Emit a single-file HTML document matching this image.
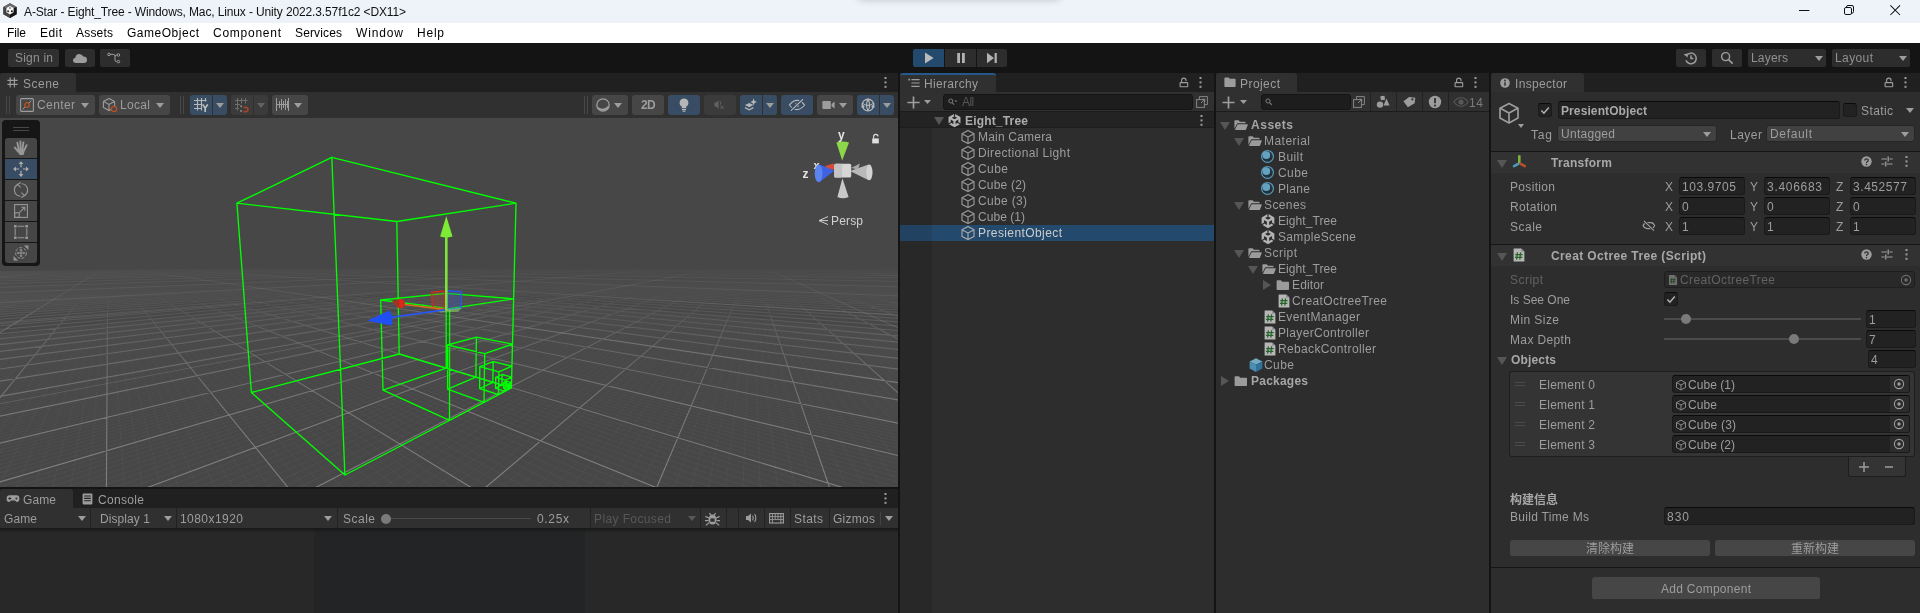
<!DOCTYPE html>
<html><head><meta charset="utf-8"><title>Unity</title>
<style>
html,body{margin:0;padding:0;}
body{width:1920px;height:613px;overflow:hidden;background:#141414;position:relative;font-family:"Liberation Sans","Noto Sans CJK SC",sans-serif;font-size:12px;}
.b{position:absolute;box-sizing:border-box;display:block;}
.t{position:absolute;white-space:pre;line-height:16px;height:16px;}
.fld{background:#2a2a2a;border:1px solid #212121;border-top-color:#0d0d0d;border-radius:3px;}
.btn{background:#515151;border-radius:3px;}
.on{background:#46607c;}
#root{position:absolute;left:0;top:0;width:1920px;height:613px;will-change:transform;}

</style></head>
<body>
<div id="root">
<div class="b " style="left:0px;top:0px;width:1920px;height:23px;background:#eef3fa;"></div>
<div class="b " style="left:856px;top:-12px;width:206px;height:12px;background:#eef3fa;border-radius:0 0 8px 8px;box-shadow:0 1px 6px rgba(40,50,70,.2);"></div>
<svg class="b" style="left:3px;top:3.2px;" width="14" height="15.2" viewBox="0 0 14 15.2"><path d="M7 .2L13.6 3.9V11.3L7 15L.4 11.3V3.9Z" fill="#2a2a2a"/><path d="M7 .2L13.6 3.9L7 7.6L.4 3.9Z" fill="#6a6a6a"/><path d="M.4 3.9L7 7.6V15L.4 11.3Z" fill="#444"/><path d="M13.6 3.9L7 7.6V15L13.6 11.3Z" fill="#141414"/><path d="M7 3L10.6 5.1V9.3L7 11.4L3.4 9.3V5.1Z" fill="#f4f4f4"/><circle cx="7" cy="5" r="1" fill="#888"/><circle cx="5.1" cy="8.3" r="1" fill="#333"/><circle cx="8.9" cy="8.3" r="1" fill="#111"/></svg>
<span class="t " id="t1" style="left:24px;top:4px;color:#111;font-size:12px;letter-spacing:-0.128px;">A-Star - Eight_Tree - Windows, Mac, Linux - Unity 2022.3.57f1c2 &lt;DX11&gt;</span>
<svg class="b" style="left:1799px;top:10px;" width="11" height="1" viewBox="0 0 11 1"><rect x="0" y="0" width="10.4" height="1" fill="#111"/></svg>
<svg class="b" style="left:1843px;top:5px;" width="12" height="12" viewBox="0 0 12 12"><rect x="1.5" y="2.5" width="7" height="7" rx="1.4" fill="none" stroke="#111" stroke-width="1"/><path d="M3.5 2.5V2Q3.5 .5 5 .5H9Q10.5 .5 10.5 2V6.5Q10.5 8 9 8.3H8.5" fill="none" stroke="#111" stroke-width="1"/></svg>
<svg class="b" style="left:1890px;top:5px;" width="11" height="11" viewBox="0 0 11 11"><path d="M.4 .4L10 10M10 .4L.4 10" stroke="#111" stroke-width="1.05"/></svg>
<div class="b " style="left:0px;top:23px;width:1920px;height:20px;background:#ffffff;"></div>
<span class="t " id="t2" style="left:7px;top:25px;color:#000;font-size:12px;letter-spacing:-0.115px;">File</span>
<span class="t " id="t3" style="left:40px;top:25px;color:#000;font-size:12px;letter-spacing:0.438px;">Edit</span>
<span class="t " id="t4" style="left:76px;top:25px;color:#000;font-size:12px;letter-spacing:0.197px;">Assets</span>
<span class="t " id="t5" style="left:127px;top:25px;color:#000;font-size:12px;letter-spacing:0.516px;">GameObject</span>
<span class="t " id="t6" style="left:213px;top:25px;color:#000;font-size:12px;letter-spacing:0.744px;">Component</span>
<span class="t " id="t7" style="left:295px;top:25px;color:#000;font-size:12px;letter-spacing:0.141px;">Services</span>
<span class="t " id="t8" style="left:356px;top:25px;color:#000;font-size:12px;letter-spacing:0.863px;">Window</span>
<span class="t " id="t9" style="left:417px;top:25px;color:#000;font-size:12px;letter-spacing:0.771px;">Help</span>
<div class="b " style="left:0px;top:43px;width:1920px;height:30px;background:#141414;"></div>
<div class="b " style="left:8px;top:49px;width:51px;height:18px;background:#303030;border-radius:2px;"></div>
<span class="t " id="t10" style="left:15px;top:50px;color:#909090;font-size:12px;letter-spacing:0.216px;">Sign in</span>
<div class="b " style="left:65px;top:49px;width:30px;height:18px;background:#2d2d2d;border-radius:2px;"></div>
<svg class="b" style="left:72px;top:52px;" width="16" height="12" viewBox="0 0 16 12"><path d="M4 11Q1 11 1 8.3Q1 6 3.4 5.7Q3.8 2 7.4 2Q10.2 2 11.2 4.6Q14.8 4.4 15 7.8Q15 11 12 11Z" fill="#9d9d9d"/></svg>
<div class="b " style="left:100px;top:49px;width:30px;height:18px;background:#2d2d2d;border-radius:2px;"></div>
<svg class="b" style="left:107px;top:52px;" width="14" height="12" viewBox="0 0 14 12"><path d="M3 2.4H6.5Q8 2.4 8 4V8Q8 9.6 9.6 9.6H10M8 4.4Q8 3 9.4 3H10" fill="none" stroke="#9d9d9d" stroke-width="1"/><circle cx="2" cy="2.4" r="1.3" fill="none" stroke="#9d9d9d" stroke-width="1"/><circle cx="11.4" cy="3" r="1.3" fill="none" stroke="#9d9d9d" stroke-width="1"/><circle cx="11.4" cy="9.6" r="1.3" fill="none" stroke="#9d9d9d" stroke-width="1"/></svg>
<div class="b " style="left:913px;top:49px;width:31px;height:18px;background:#234a6c;border-radius:2px 0 0 2px;"></div>
<svg class="b" style="left:924px;top:52px;" width="10" height="12" viewBox="0 0 10 12"><path d="M1 .6V11.4L9.6 6Z" fill="#bababa"/></svg>
<div class="b " style="left:945px;top:49px;width:31px;height:18px;background:#2d2d2d;"></div>
<svg class="b" style="left:956px;top:52px;" width="10" height="12" viewBox="0 0 10 12"><path d="M1.2 1H4V11H1.2ZM6 1H8.8V11H6Z" fill="#b3b3b3"/></svg>
<div class="b " style="left:977px;top:49px;width:30px;height:18px;background:#2d2d2d;border-radius:0 2px 2px 0;"></div>
<svg class="b" style="left:986px;top:52px;" width="12" height="12" viewBox="0 0 12 12"><path d="M1 .8V11.2L8 6ZM8.6 1H10.8V11H8.6Z" fill="#b3b3b3"/></svg>
<div class="b " style="left:1676px;top:49px;width:30px;height:18px;background:#2d2d2d;border-radius:2px;"></div>
<svg class="b" style="left:1683px;top:51px;" width="15" height="14" viewBox="0 0 15 14"><path d="M3.4 4.6A5.3 5.3 0 1 1 3 9.4" fill="none" stroke="#9d9d9d" stroke-width="1.5"/><path d="M.6 3.2L4.8 2.4L4.6 6.6Z" fill="#9d9d9d"/><path d="M8 4.2V7.4H10.4" fill="none" stroke="#9d9d9d" stroke-width="1.5"/></svg>
<div class="b " style="left:1712px;top:49px;width:30px;height:18px;background:#2d2d2d;border-radius:2px;"></div>
<svg class="b" style="left:1720px;top:51px;" width="14" height="14" viewBox="0 0 14 14"><circle cx="5.6" cy="5.6" r="4" fill="none" stroke="#9d9d9d" stroke-width="1.4"/><path d="M8.6 8.6L12.6 12.6" stroke="#9d9d9d" stroke-width="1.7"/></svg>
<div class="b " style="left:1748px;top:49px;width:78px;height:18px;background:#2d2d2d;border-radius:2px;"></div>
<span class="t " id="t11" style="left:1751px;top:50px;color:#909090;font-size:12px;letter-spacing:0.194px;">Layers</span>
<svg class="b" style="left:1814.5px;top:56.0px;" width="8" height="5" viewBox="0 0 8 5"><path d="M0 0H8L4.0 5Z" fill="#9d9d9d"/></svg>
<div class="b " style="left:1832px;top:49px;width:78px;height:18px;background:#2d2d2d;border-radius:2px;"></div>
<span class="t " id="t12" style="left:1835px;top:50px;color:#909090;font-size:12px;letter-spacing:0.394px;">Layout</span>
<svg class="b" style="left:1898.5px;top:56.0px;" width="8" height="5" viewBox="0 0 8 5"><path d="M0 0H8L4.0 5Z" fill="#9d9d9d"/></svg>
<div class="b " style="left:0px;top:73px;width:898px;height:19px;background:#202020;"></div>
<div class="b " style="left:0px;top:73px;width:76px;height:19px;background:#303030;border-radius:3px 3px 0 0;"></div>
<svg class="b" style="left:7px;top:77px;" width="11" height="11" viewBox="0 0 11 11"><path d="M3.2 .5V10.5M7.4 .5V10.5M.4 3.4H10.6M.4 7.4H10.6" stroke="#9d9d9d" stroke-width="1.1"/></svg>
<span class="t " id="t13" style="left:23px;top:75.5px;color:#9d9d9d;font-size:12px;letter-spacing:0.492px;">Scene</span>
<svg class="b" style="left:883.5px;top:77.0px;" width="3" height="11" viewBox="0 0 3 11"><rect x=".5" y="0" width="2" height="2" fill="#9d9d9d"/><rect x=".5" y="4.4" width="2" height="2" fill="#9d9d9d"/><rect x=".5" y="8.8" width="2" height="2" fill="#9d9d9d"/></svg>
<div class="b " style="left:0px;top:92px;width:898px;height:26px;background:#303030;"></div>
<svg class="b" style="left:6px;top:96px;" width="4" height="18" viewBox="0 0 4 18"><path d="M.5 0V18M3.5 0V18" stroke="#484848" stroke-width="1"/></svg>
<svg class="b" style="left:180px;top:96px;" width="4" height="18" viewBox="0 0 4 18"><path d="M.5 0V18M3.5 0V18" stroke="#484848" stroke-width="1"/></svg>
<svg class="b" style="left:584px;top:96px;" width="4" height="18" viewBox="0 0 4 18"><path d="M.5 0V18M3.5 0V18" stroke="#484848" stroke-width="1"/></svg>
<div class="b " style="left:16px;top:95px;width:79px;height:20px;background:#464646;border-radius:3px;"></div>
<svg class="b" style="left:20px;top:98px;" width="14" height="14" viewBox="0 0 14 14"><rect x=".6" y=".6" width="12.8" height="12.8" rx="1" fill="none" stroke="#9d9d9d" stroke-width="1.1"/><path d="M2.6 11.4L11.4 2.6" stroke="#9d9d9d" stroke-width="1"/><circle cx="7" cy="7" r="2.3" fill="#464646" stroke="#ba5022" stroke-width="1.3"/></svg>
<span class="t " id="t14" style="left:37px;top:97px;color:#9d9d9d;font-size:12px;letter-spacing:0.394px;">Center</span>
<svg class="b" style="left:81.0px;top:103.0px;" width="8" height="5" viewBox="0 0 8 5"><path d="M0 0H8L4.0 5Z" fill="#9d9d9d"/></svg>
<div class="b " style="left:99px;top:95px;width:71px;height:20px;background:#464646;border-radius:3px;"></div>
<svg class="b" style="left:102px;top:97px;" width="16" height="16" viewBox="0 0 16 16"><path d="M7 1.6L12.6 4.4V10.6L7 13.6L1.4 10.6V4.4Z" fill="none" stroke="#9d9d9d" stroke-width="1.1" stroke-linejoin="round"/><path d="M1.6 4.5L7 7.4L12.4 4.5M7 7.4V13.4" fill="none" stroke="#9d9d9d" stroke-width="1.1"/><circle cx="12" cy="12" r="2.6" fill="#464646" stroke="#ba5022" stroke-width="1.3"/></svg>
<span class="t " id="t15" style="left:120px;top:97px;color:#9d9d9d;font-size:12px;letter-spacing:0.328px;">Local</span>
<svg class="b" style="left:156.0px;top:103.0px;" width="8" height="5" viewBox="0 0 8 5"><path d="M0 0H8L4.0 5Z" fill="#9d9d9d"/></svg>
<div class="b " style="left:190px;top:95px;width:22px;height:20px;background:#384d63;border-radius:3px 0 0 3px;"></div>
<svg class="b" style="left:194px;top:98px;" width="15" height="15" viewBox="0 0 15 15"><path d="M3.5 0V12.5M7.5 0V12.5M11.5 0V3.5M0 2.5H12.5M0 6.5H8M0 10.5H8" stroke="#b6b6b6" stroke-width="1.15" fill="none"/><path d="M8.7 6.4L11.2 10.2L13.7 6.4M11.2 10V14" stroke="#bdbdbd" stroke-width="1.7" fill="none"/></svg>
<div class="b " style="left:213px;top:95px;width:14px;height:20px;background:#384d63;border-radius:0 3px 3px 0;"></div>
<svg class="b" style="left:216.0px;top:103.0px;" width="8" height="5" viewBox="0 0 8 5"><path d="M0 0H8L4.0 5Z" fill="#9d9d9d"/></svg>
<div class="b " style="left:231px;top:95px;width:22px;height:20px;background:#3b3b3b;border-radius:3px 0 0 3px;"></div>
<svg class="b" style="left:235px;top:98px;" width="15" height="15" viewBox="0 0 15 15"><path d="M2.5 0V12.5M6.5 0V5.5M10.5 0V5.5M0 2.5H12.5M0 6.5H5M0 10.5H4" stroke="#6e6e6e" stroke-width="1" fill="none"/><path d="M8.4 9.4H10.8A2.1 2.1 0 0 1 10.8 13.6H8.4" fill="none" stroke="#a04826" stroke-width="1.8"/><rect x="5.2" y="7.3" width="1.9" height="1.9" fill="#838383"/><rect x="5.2" y="12" width="1.9" height="1.9" fill="#838383"/></svg>
<div class="b " style="left:254px;top:95px;width:14px;height:20px;background:#3b3b3b;border-radius:0 3px 3px 0;"></div>
<svg class="b" style="left:257.0px;top:103.0px;" width="8" height="5" viewBox="0 0 8 5"><path d="M0 0H8L4.0 5Z" fill="#626262"/></svg>
<div class="b " style="left:272px;top:95px;width:36px;height:20px;background:#464646;border-radius:3px;"></div>
<svg class="b" style="left:275px;top:98px;" width="15" height="14" viewBox="0 0 15 14"><path d="M1.5 0V13M13.5 0V13M1.5 6.5H13.5M4.5 3V10M6.5 1V12M8.5 3V10M10.5 1V12M12.5 3V10" stroke="#9d9d9d" stroke-width="1" fill="none"/></svg>
<svg class="b" style="left:294.0px;top:103.0px;" width="8" height="5" viewBox="0 0 8 5"><path d="M0 0H8L4.0 5Z" fill="#9d9d9d"/></svg>
<div class="b " style="left:592px;top:95px;width:36px;height:20px;background:#464646;border-radius:3px;"></div>
<svg class="b" style="left:595px;top:97px;" width="16" height="16" viewBox="0 0 16 16"><circle cx="8" cy="8" r="6.2" fill="none" stroke="#9d9d9d" stroke-width="1.3"/><path d="M3 10.6A6 6 0 0 0 13.4 10.6A7.4 5.6 0 0 1 3 10.6Z" fill="#9d9d9d"/><path d="M2.4 9.4Q8 14.4 13.6 8.6L13 12L8 14.2L3.4 12.4Z" fill="#9d9d9d"/></svg>
<svg class="b" style="left:614.0px;top:103.0px;" width="8" height="5" viewBox="0 0 8 5"><path d="M0 0H8L4.0 5Z" fill="#9d9d9d"/></svg>
<div class="b " style="left:632px;top:95px;width:32px;height:20px;background:#464646;border-radius:3px;"></div>
<span class="t " id="t16" style="left:641px;top:97px;color:#9d9d9d;font-size:12px;letter-spacing:-0.600px;font-weight:bold;">2D</span>
<div class="b " style="left:668px;top:95px;width:32px;height:20px;background:#384d63;border-radius:3px;"></div>
<svg class="b" style="left:677px;top:97px;" width="14" height="16" viewBox="0 0 14 16"><path d="M7 1.4A4.4 4.4 0 0 1 9.2 9.6V11.2H4.8V9.6A4.4 4.4 0 0 1 7 1.4Z" fill="#b6b6b6"/><path d="M5 12.6H9M5.6 14.2H8.4" stroke="#b6b6b6" stroke-width="1.1"/></svg>
<div class="b " style="left:704px;top:95px;width:32px;height:20px;background:#3b3b3b;border-radius:3px;"></div>
<svg class="b" style="left:713px;top:99px;" width="14" height="12" viewBox="0 0 14 12"><path d="M1.4 3.4H3.2L5.6 1.2V9.8L3.2 7.6H1.4Z" fill="#626262"/><path d="M7.4 6.6L10.6 10M10.6 6.6L7.4 10" stroke="#626262" stroke-width="1"/><path d="M7 2.4Q8.4 4 7.4 5.6" stroke="#626262" stroke-width="1" fill="none"/></svg>
<div class="b " style="left:740px;top:95px;width:22px;height:20px;background:#384d63;border-radius:3px 0 0 3px;"></div>
<svg class="b" style="left:744px;top:98px;" width="14" height="14" viewBox="0 0 14 14"><path d="M1 7L5.2 5L9.4 7L5.2 9.2Z" fill="#b6b6b6"/><path d="M1 9.6L5.2 11.8L9.4 9.6" fill="none" stroke="#b6b6b6" stroke-width="1.2"/><path d="M9.6 .6L10.6 3L13 4L10.6 5L9.6 7.4L8.6 5L6.2 4L8.6 3Z" fill="#b6b6b6"/></svg>
<div class="b " style="left:763px;top:95px;width:14px;height:20px;background:#384d63;border-radius:0 3px 3px 0;"></div>
<svg class="b" style="left:766.0px;top:103.0px;" width="8" height="5" viewBox="0 0 8 5"><path d="M0 0H8L4.0 5Z" fill="#9d9d9d"/></svg>
<div class="b " style="left:781px;top:95px;width:32px;height:20px;background:#384d63;border-radius:3px;"></div>
<svg class="b" style="left:788px;top:98px;" width="18" height="14" viewBox="0 0 18 14"><path d="M1.4 7Q5 2.4 9 2.4Q13 2.4 16.6 7Q13 11.6 9 11.6Q5 11.6 1.4 7Z" fill="none" stroke="#b6b6b6" stroke-width="1.2"/><circle cx="9" cy="7" r="2.2" fill="#b6b6b6"/><path d="M3 12.6L15 1.2" stroke="#2f445e" stroke-width="3"/><path d="M3 12.6L15 1.2" stroke="#b6b6b6" stroke-width="1.2"/></svg>
<div class="b " style="left:817px;top:95px;width:36px;height:20px;background:#464646;border-radius:3px;"></div>
<svg class="b" style="left:822px;top:100px;" width="14" height="10" viewBox="0 0 14 10"><rect x=".4" y="1" width="8.4" height="8" rx=".8" fill="#9d9d9d"/><path d="M9.6 4L12.6 1.6V8.6L9.6 6.2Z" fill="#9d9d9d"/></svg>
<svg class="b" style="left:839.0px;top:103.0px;" width="8" height="5" viewBox="0 0 8 5"><path d="M0 0H8L4.0 5Z" fill="#9d9d9d"/></svg>
<div class="b " style="left:857px;top:95px;width:22px;height:20px;background:#384d63;border-radius:3px 0 0 3px;"></div>
<svg class="b" style="left:861px;top:98px;" width="14" height="14" viewBox="0 0 14 14"><circle cx="7" cy="7" r="5.8" fill="none" stroke="#b6b6b6" stroke-width="1.3"/><path d="M1.6 5.4Q7 9.4 12.4 5.4M7 1.2Q4 7 7 12.8M7 1.2Q10.4 7 7 12.8" fill="none" stroke="#b6b6b6" stroke-width="1.1"/><circle cx="7" cy="2" r="1.5" fill="#b6b6b6"/><circle cx="2" cy="8.6" r="1.5" fill="#b6b6b6"/><circle cx="12" cy="8.6" r="1.5" fill="#b6b6b6"/></svg>
<div class="b " style="left:880px;top:95px;width:14px;height:20px;background:#384d63;border-radius:0 3px 3px 0;"></div>
<svg class="b" style="left:883.0px;top:103.0px;" width="8" height="5" viewBox="0 0 8 5"><path d="M0 0H8L4.0 5Z" fill="#9d9d9d"/></svg>
<svg id="scenesvg" width="898" height="369" viewBox="0 0 898 369" style="position:absolute;left:0px;top:118px">
<defs>
<linearGradient id="sky" x1="0" y1="0" x2="0" y2="1"><stop offset="0" stop-color="#474747"/><stop offset="1" stop-color="#474747"/></linearGradient>
<linearGradient id="fade" x1="0" y1="0" x2="0" y2="1"><stop offset="0.406" stop-color="#000"/><stop offset="0.477" stop-color="#202020"/><stop offset="0.585" stop-color="#707070"/><stop offset="0.775" stop-color="#d0d0d0"/><stop offset="1" stop-color="#fff"/></linearGradient>
<linearGradient id="fade2" x1="0" y1="0" x2="0" y2="1"><stop offset="0.406" stop-color="#000"/><stop offset="0.433" stop-color="#555"/><stop offset="0.558" stop-color="#bbb"/></linearGradient>
<mask id="gm2"><rect width="898" height="369" fill="url(#fade2)"/></mask>
<mask id="gm"><rect width="898" height="369" fill="url(#fade)"/></mask>
</defs>
<rect width="898" height="369" fill="url(#sky)"/>
<g mask="url(#gm)" fill="none">
<path d="M918 221.9L910.9 218.6M918 224.9L903.7 218M918 228.1L896.7 217.3M918 235.4L883 216.1M918 239.5L876.4 215.5M918 243.9L869.8 215M918 248.9L863.4 214.4M918 254.3L857.1 213.8M918 260.3L850.8 213.3M918 267L844.7 212.8M918 274.5L838.7 212.2M-20 219.6L-19.6 219.4M918 283L832.8 211.7M-20 223L-12.7 218.7M918 303.8L821.2 210.7M-20 230.8L0.6 217.4M918 316.7L815.6 210.2M-20 235.3L7.1 216.8M918 331.8L810 209.7M-20 240.4L13.5 216.1M918 349.8L804.5 209.2M-20 246.1L19.8 215.5M918 371.6L799.2 208.7M-20 252.6L25.9 214.9M911.8 389L793.9 208.3M-20 260L32 214.3M892.9 389L788.6 207.8M-20 268.5L38 213.7M874 389L783.5 207.4M-20 278.4L43.8 213.2M855.1 389L778.4 206.9M-20 290.2L49.6 212.6M817.4 389L768.5 206M-20 321.4L60.9 211.5M798.5 389L763.7 205.6M-20 342.8L66.4 211M779.7 389L758.9 205.2M-20 370.3L71.8 210.4M760.9 389L754.2 204.8M-11.2 389L77.1 209.9M742.2 389L749.6 204.4M8.3 389L82.4 209.4M723.4 389L745 204M27.9 389L87.5 208.9M704.7 389L740.5 203.6M47.5 389L92.6 208.4M685.9 389L736 203.2M67.1 389L97.6 207.9M667.2 389L731.7 202.8M86.7 389L102.6 207.4M629.8 389L723.1 202M126 389L112.2 206.5M611.2 389L718.9 201.7M145.7 389L116.9 206M592.5 389L714.7 201.3M165.4 389L121.6 205.6M573.9 389L710.6 200.9M185.1 389L126.1 205.1M555.3 389L706.6 200.6M204.8 389L130.7 204.7M536.7 389L702.6 200.2M224.6 389L135.1 204.3M518.1 389L698.7 199.9M244.3 389L139.5 203.8M499.5 389L694.8 199.5M264.1 389L143.8 203.4M481 389L691 199.2M283.9 389L148.1 203M443.9 389L683.5 198.5M323.6 389L156.4 202.2M425.4 389L679.8 198.2M343.5 389L160.5 201.8M407 389L676.2 197.9M363.3 389L164.5 201.4M388.5 389L672.6 197.6M383.2 389L168.5 201M370 389L669 197.3M403.2 389L172.5 200.6M351.6 389L665.5 197M423.1 389L176.3 200.3M333.2 389L662.1 196.7M443.1 389L180.1 199.9M314.8 389L658.7 196.4M463 389L183.9 199.5M296.4 389L655.3 196.1M483 389L187.6 199.1M259.7 389L648.7 195.5M523.1 389L194.9 198.4M241.3 389L645.4 195.2M543.1 389L198.5 198.1M223 389L642.2 194.9M563.2 389L202 197.7M204.7 389L639 194.6M583.3 389L205.5 197.4M186.4 389L635.9 194.4M603.4 389L209 197.1M168.2 389L632.8 194.1M623.5 389L212.4 196.7M149.9 389L629.7 193.8M643.7 389L215.7 196.4M131.7 389L626.7 193.5M663.9 389L219.1 196.1M113.4 389L623.7 193.3M684 389L222.3 195.8M77 389L617.8 192.8M724.5 389L228.8 195.1M58.9 389L614.9 192.5M744.7 389L231.9 194.8M40.7 389L612.1 192.3M765 389L235 194.5M22.5 389L609.3 192M785.3 389L238.1 194.2M4.4 389L606.5 191.8M805.6 389L241.2 193.9M-13.7 389L603.7 191.5M825.9 389L244.2 193.6M-20 385.3L601 191.3M846.2 389L247.2 193.3M-20 379.9L598.3 191M866.6 389L250.1 193.1M-20 374.7L595.6 190.8M887 389L253 192.8M-20 365L590.3 190.3M918 386.1L258.7 192.2M-20 360.4L587.7 190.1M918 380.3L261.5 191.9M-20 356L585.2 189.9M918 374.8L264.3 191.7M-20 351.8L582.6 189.7M918 369.5L267.1 191.4M-20 347.8L580.1 189.4M918 364.5L269.8 191.1M-20 344L577.7 189.2M918 359.7L272.5 190.9M-20 340.2L575.2 189M918 355L275.1 190.6M-20 336.7L572.8 188.8M918 350.6L277.7 190.4M-20 333.2L570.4 188.6M918 346.4L280.3 190.1M-20 326.7L565.6 188.2M918 338.4L285.4 189.6M-20 323.6L563.3 188M918 334.6L287.9 189.4M-20 320.6L561 187.8M918 331L290.4 189.1M-20 317.7L558.7 187.6M918 327.5L292.9 188.9M-20 314.9L556.4 187.4M918 324.2L295.3 188.6M-20 312.2L554.2 187.2M918 320.9L297.7 188.4M-20 309.6L552 187M918 317.8L300.1 188.2M-20 307L549.8 186.8M918 314.8L302.5 187.9M-20 304.6L547.6 186.6M918 311.9L304.8 187.7M-20 299.9L543.3 186.2M918 306.4L309.4 187.3M-20 297.7L541.2 186M918 303.7L311.7 187M-20 295.5L539.1 185.8M918 301.2L313.9 186.8M-20 293.4L537.1 185.6M918 298.7L316.1 186.6M-20 291.3L535 185.5M918 296.3L318.3 186.4M-20 289.3L533 185.3M918 294L320.5 186.2M-20 287.4L531 185.1M918 291.7L322.6 186M-20 285.5L529 184.9M918 289.5L324.8 185.8M-20 283.6L527 184.8M918 287.4L326.9 185.6M-20 280.1L523.1 184.4M918 283.3L331 185.2M-20 278.4L521.2 184.2M918 281.4L333.1 185M-20 276.8L519.3 184.1M918 279.5L335.1 184.8M-20 275.2L517.4 183.9M918 277.7L337.1 184.6M-20 273.6L515.5 183.7M918 275.9L339.1 184.4M-20 272L513.7 183.6M918 274.1L341.1 184.2M-20 270.5L511.9 183.4M918 272.4L343 184M-20 269.1L510 183.3M918 270.7L345 183.8M-20 267.7L508.2 183.1M918 269.1L346.9 183.6M-20 264.9L504.7 182.8M918 266L350.6 183.2M-20 263.6L502.9 182.6M918 264.5L352.5 183.1M-20 262.3L501.2 182.5M918 263.1L354.3 182.9M-20 261L499.5 182.3M918 261.6L356.2 182.7M-20 259.8L497.8 182.2M918 260.2L358 182.5M-20 258.6L496.1 182M918 258.9L359.8 182.4M-20 257.4L494.4 181.9M918 257.5L361.6 182.2M-20 256.2L492.7 181.7M918 256.2L363.3 182M-20 255.1L491.1 181.6M918 255L365.1 181.8M-20 252.9L487.8 181.3M918 252.5L368.5 181.5M-20 251.8L486.2 181.2M918 251.3L370.2 181.3M-20 250.7L484.6 181M918 250.1L371.9 181.2M-20 249.7L483.1 180.9M918 249L373.6 181M-20 248.7L481.5 180.7M918 247.9L375.2 180.8M-20 247.7L479.9 180.6M918 246.8L376.9 180.7M-20 246.8L478.4 180.5M918 245.7L378.5 180.5M-20 245.8L476.9 180.3M918 244.7L380.1 180.4M-20 244.9L475.3 180.2M918 243.7L381.7 180.2M-20 243.1L472.3 179.9M918 241.7L384.8 179.9M-20 242.2L470.9 179.8M918 240.7L386.4 179.8M-20 241.3L469.4 179.7M918 239.8L387.9 179.6M-20 240.5L467.9 179.6M918 238.8L389.5 179.5M-20 239.6L466.5 179.4M918 237.9L391 179.3M-20 238.8L465.1 179.3M918 237L392.5 179.2M-20 238L463.6 179.2M918 236.1L394 179M-20 237.2L462.2 179.1M918 235.3L395.5 178.9M-20 236.5L460.8 178.9M918 234.4L396.9 178.7M-20 235L458.1 178.7M918 232.8L399.9 178.4M-20 234.2L456.7 178.6M918 232L401.3 178.3M-20 233.5L455.3 178.4M918 231.2L402.7 178.2M-20 232.8L454 178.3M918 230.4L404.1 178M-20 232.1L452.7 178.2M918 229.7L405.5 177.9M-20 231.4L451.3 178.1M918 228.9L406.9 177.8M-20 230.7L450 178M918 228.2L408.3 177.6M-20 230.1L448.7 177.9M918 227.5L409.6 177.5M-20 229.4L447.4 177.7M918 226.8L411 177.4M-20 228.1L444.9 177.5M918 225.4L413.7 177.1M-20 227.5L443.6 177.4M918 224.7L415 177M-20 226.9L442.4 177.3M918 224L416.3 176.8M-20 226.3L441.1 177.2M918 223.4L417.6 176.7M-20 225.7L439.9 177.1M918 222.7L418.9 176.6M-20 225.1L438.6 177M918 222.1L420.2 176.5M-20 224.5L437.4 176.9M918 221.5L421.5 176.3M-20 224L436.2 176.8M918 220.9L422.7 176.2M-20 223.4L435 176.7M918 220.3L424 176.1M-20 222.3L432.6 176.4M918 219.1L426.5 175.8M-20 221.8L431.5 176.3M918 218.5L427.7 175.7M-20 221.2L430.3 176.2M918 217.9L428.9 175.6M-20 220.7L429.1 176.1M918 217.4L430.1 175.5M-20 220.2L428 176M918 216.8L431.3 175.4M-20 219.7L426.8 175.9M918 216.3L432.5 175.3M-20 219.2L425.7 175.8M918 215.8L433.7 175.1" stroke="#8a8a8a" stroke-opacity=".10" stroke-width="1"/>
<path d="M918 152.8L913.7 152.6M918 153.2L904.8 152.5M918 153.7L896.1 152.5M918 154.3L887.5 152.4M918 154.9L879.2 152.4M918 155.5L871 152.3M918 156.3L863 152.3M918 157.2L855.2 152.2M-20 158.3L-14.8 157.9M918 158.1L847.5 152.2M-20 159L-5.8 157.8M918 159.2L840 152.1M-20 159.7L3 157.6M918 160.5L832.6 152.1M-20 160.6L11.6 157.4M918 162L825.4 152M-20 161.6L20 157.3M918 163.9L818.3 152M-20 162.8L28.2 157.1M918 166.1L811.4 152M-20 164.2L36.2 157M918 168.8L804.6 151.9M-20 166L44.1 156.9M918 172.2L797.9 151.9M-20 168.1L51.8 156.7M918 176.7L791.4 151.8M-20 170.9L59.3 156.6M918 182.9L785 151.8M-20 174.7L66.7 156.4M918 191.8L778.7 151.8M-20 179.9L73.9 156.3M918 205.9L772.5 151.7M-20 187.7L80.9 156.2M918 231.6L766.4 151.7M-20 200.7L87.8 156.1M918 292.7L760.4 151.7M-20 226.7L94.6 155.9M836.2 389L754.6 151.6M-20 304.2L101.2 155.8M648.5 389L748.8 151.6M106.3 389L107.7 155.7M462.5 389L743.2 151.6M303.8 389L114.1 155.6M278 389L737.6 151.5M503.1 389L120.3 155.5M95.2 389L732.2 151.5M704.3 389L126.5 155.4M-20 369.7L726.8 151.5M907.4 389L132.5 155.3M-20 329.9L721.5 151.4M918 342.3L138.4 155.2M-20 302.2L716.3 151.4M918 309.1L144.1 155.1M-20 281.9L711.2 151.4M918 285.3L149.8 154.9M-20 266.3L706.2 151.3M918 267.6L155.4 154.8M-20 253.9L701.3 151.3M918 253.7L160.8 154.7M-20 244L696.4 151.3M918 242.7L166.2 154.7M-20 235.7L691.7 151.2M918 233.6L171.5 154.6M-20 228.8L687 151.2M918 226.1L176.7 154.5M-20 222.8L682.4 151.2M918 219.7L181.7 154.4M-20 217.7L677.8 151.2M918 214.2L186.7 154.3M-20 213.3L673.3 151.1M918 209.5L191.6 154.2M-20 209.4L668.9 151.1M918 205.3L196.5 154.1M-20 205.9L664.6 151.1M918 201.7L201.2 154M-20 202.8L660.3 151.1M918 198.4L205.9 153.9M-20 200L656.1 151M918 195.5L210.5 153.9M-20 197.5L652 151M918 192.9L215 153.8M-20 195.3L647.9 151M918 190.5L219.4 153.7M-20 193.2L643.9 151M918 188.4L223.8 153.6M-20 191.3L639.9 150.9M918 186.4L228 153.5M-20 189.6L636 150.9M918 184.6L232.3 153.5M-20 187.9L632.2 150.9M918 182.9L236.4 153.4M-20 186.5L628.4 150.9M918 181.4L240.5 153.3M-20 185.1L624.7 150.9M918 180L244.5 153.2M-20 183.8L621 150.8M918 178.7L248.5 153.2M-20 182.6L617.4 150.8M918 177.4L252.4 153.1M-20 181.5L613.8 150.8M918 176.3L256.2 153M-20 180.5L610.2 150.8M918 175.2L260 153M-20 179.5L606.8 150.7M918 174.2L263.7 152.9M-20 178.6L603.3 150.7M918 173.3L267.4 152.8M-20 177.7L600 150.7M918 172.4L271 152.8M-20 176.9L596.6 150.7M918 171.6L274.6 152.7M-20 176.1L593.3 150.7M918 170.8L278.1 152.6M-20 175.4L590.1 150.6M918 170L281.5 152.6M-20 174.7L586.9 150.6M918 169.3L284.9 152.5M-20 174L583.7 150.6M918 168.6L288.3 152.5M-20 173.4L580.6 150.6M918 168L291.6 152.4M-20 172.8L577.5 150.6M918 167.4L294.9 152.3M-20 172.2L574.5 150.6M918 166.8L298.1 152.3M-20 171.7L571.5 150.5M918 166.3L301.2 152.2M-20 171.1L568.5 150.5M918 165.7L304.4 152.2M-20 170.7L565.6 150.5M918 165.2L307.5 152.1M-20 170.2L562.7 150.5M918 164.8L310.5 152.1M-20 169.7L559.8 150.5M918 164.3L313.5 152M-20 169.3L557 150.5M918 163.9L316.5 151.9M-20 168.9L554.2 150.4M918 163.4L319.4 151.9M-20 168.5L551.5 150.4M918 163L322.3 151.8M-20 168.1L548.8 150.4M918 162.6L325.1 151.8M-20 167.7L546.1 150.4M918 162.3L327.9 151.7M-20 167.3L543.4 150.4M918 161.9L330.7 151.7M-20 167L540.8 150.4M918 161.6L333.4 151.6M-20 166.7L538.2 150.3M918 161.2L336.1 151.6M-20 166.4L535.7 150.3M918 160.9L338.8 151.5M-20 166L533.1 150.3M918 160.6L341.4 151.5M-20 165.7L530.6 150.3M918 160.3L344 151.4M-20 165.5L528.2 150.3M918 160L346.6 151.4M-20 165.2L525.7 150.3M918 159.7L349.1 151.4M-20 164.9L523.3 150.3M918 159.4L351.6 151.3M-20 164.6L520.9 150.2M918 159.2L354.1 151.3M-20 164.4L518.6 150.2M918 158.9L356.5 151.2M-20 164.1L516.3 150.2M918 158.7L358.9 151.2M-20 163.9L514 150.2M918 158.4L361.3 151.1M-20 163.7L511.7 150.2M918 158.2L363.6 151.1M-20 163.5L509.4 150.2M918 158L366 151.1M-20 163.2L507.2 150.2M918 157.8L368.3 151M-20 163L505 150.1M918 157.5L370.5 151M-20 162.8L502.8 150.1M918 157.3L372.8 150.9M-20 162.6L500.7 150.1M918 157.1L375 150.9M-20 162.4L498.5 150.1M918 156.9L377.2 150.8M-20 162.2L496.4 150.1M918 156.8L379.3 150.8M-20 162.1L494.3 150.1M918 156.6L381.5 150.8M-20 161.9L492.3 150.1M918 156.4L383.6 150.7M-20 161.7L490.2 150.1M918 156.2L385.7 150.7M-20 161.5L488.2 150.1M918 156.1L387.8 150.7M-20 161.4L486.2 150M918 155.9L389.8 150.6M-20 161.2L484.2 150M918 155.7L391.8 150.6M-20 161L482.3 150M918 155.6L393.8 150.5M-20 160.9L480.4 150M918 155.4L395.8 150.5M-20 160.7L478.4 150M918 155.3L397.8 150.5M-20 160.6L476.5 150M918 155.1L399.7 150.4M-20 160.5L474.7 150M918 155L401.6 150.4M-20 160.3L472.8 150M918 154.8L403.5 150.4M-20 160.2L471 149.9M918 154.7L405.4 150.3M-20 160L469.1 149.9M918 154.6L407.2 150.3M-20 159.9L467.3 149.9M918 154.4L409.1 150.3M-20 159.8L465.6 149.9M918 154.3L410.9 150.2M-20 159.7L463.8 149.9M918 154.2L412.7 150.2M-20 159.5L462 149.9M918 154.1L414.4 150.2M-20 159.4L460.3 149.9M918 153.9L416.2 150.1M-20 159.3L458.6 149.9M918 153.8L417.9 150.1M-20 159.2L456.9 149.9M918 153.7L419.7 150.1M-20 159.1L455.2 149.9M918 153.6L421.4 150.1M-20 159L453.5 149.8M918 153.5L423 150M-20 158.9L451.9 149.8M918 153.4L424.7 150M-20 158.8L450.2 149.8M918 153.3L426.4 150M-20 158.7L448.6 149.8M918 153.2L428 149.9M-20 158.6L447 149.8M918 153.1L429.6 149.9M-20 158.5L445.4 149.8M918 153L431.2 149.9M-20 158.4L443.9 149.8M918 152.9L432.8 149.8M-20 158.3L442.3 149.8M918 152.8L434.4 149.8M-20 158.2L440.8 149.8M918 152.7L435.9 149.8M-20 158.1L439.2 149.8M918 152.6L437.5 149.8M-20 158L437.7 149.8M918 152.5L439 149.7" stroke="#a8a8a8" stroke-opacity=".6" stroke-width="1.1"/>
</g>
<path d="M918 149.7L882.8 148.5M918 152.6L837.7 148.5M-20 155.7L14.2 153.6M918 160L797.5 148.5M-20 161.6L59.9 153M918 219L761.6 148.4M-20 227.2L100.3 152.5M-20 289.5L729.2 148.4M918 267.4L136.2 152M-20 207.3L699.8 148.4M918 198.4L168.3 151.6M-20 185.6L673.1 148.3M918 178.6L197.3 151.2M-20 175.7L648.7 148.3M918 169.3L223.5 150.9M-20 169.9L626.4 148.3M918 163.8L247.4 150.6M-20 166.2L605.8 148.3M918 160.3L269.2 150.3M-20 163.5L586.8 148.3M918 157.8L289.2 150M-20 161.6L569.1 148.2M918 155.9L307.6 149.8M-20 160.1L552.8 148.2M918 154.4L324.6 149.6M-20 158.9L537.5 148.2M918 153.3L340.3 149.4M-20 157.9L523.3 148.2M918 152.3L354.9 149.2M-20 157.1L509.9 148.2M918 151.6L368.6 149M-20 156.5L497.5 148.2M918 150.9L381.3 148.9M-20 155.9L485.7 148.2M918 150.3L393.2 148.7M-20 155.4L474.6 148.2M918 149.9L404.3 148.6M-20 155L464.2 148.1M918 149.4L414.8 148.4M-20 154.6L454.4 148.1M918 149.1L424.7 148.3M-20 154.2L445 148.1M918 148.7L434 148.2M-20 153.9L436.2 148.1M918 148.4L442.8 148.1M-20 153.7L427.8 148.1M918 148.2L451.1 148" fill="none" mask="url(#gm2)" stroke="#a8a8a8" stroke-opacity=".3" stroke-width="1"/>
<path d="M344.9 357L511.4 270M344.9 357L331.8 39.3M344.9 357L251.4 274.5M511.4 270L516 85.2M511.4 270L399.2 236M331.8 39.3L516 85.2M331.8 39.3L236.9 85.2M516 85.2L396.8 103.5M251.4 274.5L399.2 236M251.4 274.5L236.9 85.2M399.2 236L396.8 103.5M236.9 85.2L396.8 103.5M449.5 302.3L511.4 270M449.5 302.3L449.6 190.6M449.5 302.3L383 272.2M511.4 270L513.6 180.8M511.4 270L446.2 250.2M449.6 190.6L513.6 180.8M449.6 190.6L380.7 182M513.6 180.8L446.2 175.3M383 272.2L446.2 250.2M383 272.2L380.7 182M446.2 250.2L446.2 175.3M380.7 182L446.2 175.3M484 284.3L511.4 270M484 284.3L484.7 235.7M484 284.3L447.6 271.1M511.4 270L512.5 226.1M511.4 270L475.9 259.2M484.7 235.7L512.5 226.1M484.7 235.7L447.6 227M512.5 226.1L476.4 219.2M447.6 271.1L475.9 259.2M447.6 271.1L447.6 227M475.9 259.2L476.4 219.2M447.6 227L476.4 219.2M498.4 276.7L511.4 270M498.4 276.7L498.9 253.9M498.4 276.7L479.6 270.5M511.4 270L511.9 248.2M511.4 270L492.8 264.3M498.9 253.9L511.9 248.2M498.9 253.9L479.8 248.7M511.9 248.2L493.2 243.6M479.6 270.5L492.8 264.3M479.6 270.5L479.8 248.7M492.8 264.3L493.2 243.6M479.8 248.7L493.2 243.6M505 273.3L511.4 270M505 273.3L505.3 262.2M505 273.3L495.5 270.2M511.4 270L511.6 259.1M511.4 270L501.9 267.1M505.3 262.2L511.6 259.1M505.3 262.2L495.7 259.4M511.6 259.1L502.1 256.5M495.5 270.2L501.9 267.1M495.5 270.2L495.7 259.4M501.9 267.1L502.1 256.5M495.7 259.4L502.1 256.5M508.2 271.6L511.4 270M508.2 271.6L508.4 266.1M508.2 271.6L503.4 270.1M511.4 270L511.5 264.6M511.4 270L506.6 268.5M508.4 266.1L511.5 264.6M508.4 266.1L503.5 264.7M511.5 264.6L506.7 263.2M503.4 270.1L506.6 268.5M503.4 270.1L503.5 264.7M506.6 268.5L506.7 263.2M503.5 264.7L506.7 263.2M509.8 270.8L511.4 270M509.8 270.8L509.9 268.1M509.8 270.8L507.4 270M511.4 270L511.4 267.3M511.4 270L508.9 269.2M509.9 268.1L511.4 267.3M509.9 268.1L507.5 267.3M511.4 267.3L509 266.5M507.4 270L508.9 269.2M507.4 270L507.5 267.3M508.9 269.2L509 266.5M507.5 267.3L509 266.5" fill="none" stroke="#00ff00" stroke-width="1.35" stroke-linecap="round"/>
<g>
<path d="M360 192.1L480 190.1L470 195.1L372 195.6Z" fill="#9fe870" fill-opacity=".0"/>
<path d="M431.7 174.2L445 172.8L445 191.6L432.5 190.4Z" fill="#c8382c" fill-opacity=".28" stroke="#d8281c" stroke-width="1.2"/>
<path d="M447.6 172.6L461.6 173.6L461.4 190.0L447.6 191.6Z" fill="#3a5ce8" fill-opacity=".28" stroke="#2a55f0" stroke-width="1.2"/>
<path d="M436 192.0L462 189.79999999999998L458 193.79999999999998L440 194.6Z" fill="#8fe060" fill-opacity=".55"/>
<line x1="446.3" y1="191.6" x2="403" y2="186.3" stroke="#d86a1a" stroke-width="1.6"/>
<circle cx="400.3" cy="185.7" r="4.7" fill="#d8281c"/>
<path d="M391.8 183.4L399 181.4L399.5 189.8Z" fill="#a8301c"/>
<line x1="446.3" y1="191.6" x2="391" y2="199.4" stroke="#2a55f0" stroke-width="1.6"/>
<path d="M367.2 202.7L389.5 192.4Q393.8 199.5 391.6 207.6Z" fill="#1f50f5"/>
<rect x="445.0" y="118" width="2.6" height="74.6" fill="#7fe33a"/>
<path d="M446.3 98L452.5 118.6Q446.3 120.6 440.1 118.6Z" fill="#7dea35"/>
</g><g>
<path d="M825 48L833.5 45.5L835 51.5L827 51Z" fill="#d84a3a"/>
<text x="813.5" y="50.5" fill="#e6e6e6" font-family="Liberation Sans, sans-serif" font-size="11" font-weight="bold">x</text>
<path d="M834.5 52.5L819.5 46.599999999999994Q813 55.5 819.5 64.19999999999999Z" fill="#3f62e0"/>
<ellipse cx="818.6" cy="55.400000000000006" rx="3.9" ry="8.8" fill="#5c84f0"/>
<path d="M842.2 42.400000000000006L836.4 24.400000000000006Q842.6 22.599999999999994 849 24.400000000000006Z" fill="#8cd84a"/>
<path d="M842.4 60.19999999999999L837.4 79Q842.8 81.4 848.6 79Z" fill="#c9c9c9"/>
<path d="M850 53L868.6 46.599999999999994Q874.6 54.400000000000006 868.6 62.19999999999999Z" fill="#b9b9b9"/>
<ellipse cx="869.4" cy="54.400000000000006" rx="3.1" ry="7.8" fill="#d2d2d2"/>
<path d="M851 50L860 45.400000000000006L858 51.5Z" fill="#a8a8a8"/>
<rect x="834.2" y="45.80000000000001" width="17" height="13.8" rx="1.5" fill="#d6d6d6"/>
<rect x="834.2" y="45.80000000000001" width="8" height="13.8" rx="1.5" fill="#c4c4c4"/>
<g fill="#e6e6e6" font-family="Liberation Sans, sans-serif" font-size="12" font-weight="bold">
<text x="838" y="20.5">y</text><text x="802.5" y="60">z</text>
</g>
<path d="M872.2 20.400000000000006h6.6v5h-6.6z" fill="#e0e0e0"/><path d="M873.6 20.400000000000006v-1.8a2.2 2.2 0 0 1 4.4 0" fill="none" stroke="#e0e0e0" stroke-width="1.1"/>
<path d="M828 98.6L819 102.6L828 106.6M819 102.6H828" fill="none" stroke="#d0d0d0" stroke-width="1"/>
</g>
</svg>
<span class="t " id="t17" style="left:831px;top:212.5px;color:#d2d2d2;font-size:12px;letter-spacing:0.160px;">Persp</span>
<div class="b " style="left:2px;top:120px;width:38px;height:146px;background:#161616;border-radius:4px;"></div>
<svg class="b" style="left:13px;top:126.5px;" width="16" height="4" viewBox="0 0 16 4"><path d="M0 .5H16M0 3.5H16" stroke="#484848" stroke-width="1"/></svg>
<div class="b " style="left:5px;top:138px;width:32px;height:20px;background:#464646;border-radius:3px 3px 0 0;"></div>
<div class="b " style="left:5px;top:159px;width:32px;height:20px;background:#384d63;"></div>
<div class="b " style="left:5px;top:180px;width:32px;height:20px;background:#464646;"></div>
<div class="b " style="left:5px;top:201px;width:32px;height:20px;background:#464646;"></div>
<div class="b " style="left:5px;top:222px;width:32px;height:20px;background:#464646;"></div>
<div class="b " style="left:5px;top:243px;width:32px;height:20px;background:#464646;border-radius:0 0 3px 3px;"></div>
<svg class="b" style="left:13px;top:140px;" width="16" height="16" viewBox="0 0 16 16"><path d="M4.6 9.4L11.6 9.6L11 14.6Q8.4 15.6 6 14.6Z" fill="#979797"/><path d="M5.4 11.8L1.9 7.6M5.7 9.8L4.4 2.8M7.6 9.6L7.4 1.4M9.4 9.7L10.4 2.4M11 10.6L13.6 5.2" stroke="#979797" stroke-width="1.9" stroke-linecap="round" fill="none"/></svg>
<svg class="b" style="left:12px;top:160px;" width="18" height="18" viewBox="0 0 16 16"><path d="M8 1L10.2 3.6H5.8ZM8 15L10.2 12.4H5.8ZM1 8L3.6 5.8V10.2ZM15 8L12.4 5.8V10.2Z" fill="#adadad"/><path d="M8 3V6.4M8 9.6V13M3 8H6.4M9.6 8H13" stroke="#adadad" stroke-width="1.1"/></svg>
<svg class="b" style="left:13px;top:182px;" width="16" height="16" viewBox="0 0 16 16"><path d="M8.6 1.8A6.2 6.2 0 0 1 11.4 13.4M7.4 14.2A6.2 6.2 0 0 1 4.6 2.6" fill="none" stroke="#979797" stroke-width="1.1"/><path d="M8.4 10.6L11.6 13.6L8.2 15.4M7.6 5.4L4.4 2.4L7.8 .6" fill="none" stroke="#979797" stroke-width="1.1"/></svg>
<svg class="b" style="left:13px;top:203px;" width="16" height="16" viewBox="0 0 16 16"><rect x="1.6" y="1.6" width="12.8" height="12.8" fill="none" stroke="#979797" stroke-width="1.1"/><rect x="1.6" y="9.8" width="4.6" height="4.6" fill="none" stroke="#979797" stroke-width="1.1"/><path d="M6.6 9.4L11.6 4.4M8.2 4.2H11.8V7.8" fill="none" stroke="#979797" stroke-width="1.1"/></svg>
<svg class="b" style="left:13px;top:224px;" width="16" height="16" viewBox="0 0 16 16"><path d="M2.2 4.6V11.4M13.8 4.6V11.4M4.6 2.2H11.4M4.6 13.8H11.4" stroke="#979797" stroke-width="1.1"/><path d="M1 1H3.6V3.6H1ZM12.4 1H15V3.6H12.4ZM1 12.4H3.6V15H1ZM12.4 12.4H15V15H12.4Z" fill="#979797"/></svg>
<svg class="b" style="left:13px;top:245px;" width="16" height="16" viewBox="0 0 16 16"><circle cx="8" cy="8" r="5.4" fill="none" stroke="#979797" stroke-width="1" stroke-dasharray="3 1.6"/><path d="M8 3.6L9.6 5.6H6.4ZM8 12.4L9.6 10.4H6.4ZM3.6 8L5.6 6.4V9.6ZM12.4 8L10.4 6.4V9.6Z" fill="#979797"/><path d="M8 5V11M5 8H11" stroke="#979797" stroke-width="1"/><path d="M15.4 .6V5L11 .6ZM.6 15.4H5L.6 11Z" fill="#979797"/></svg>
<div class="b " style="left:0px;top:487px;width:898px;height:2px;background:#141414;"></div>
<div class="b " style="left:0px;top:489px;width:898px;height:19px;background:#202020;"></div>
<div class="b " style="left:0px;top:489px;width:73px;height:19px;background:#303030;border-radius:3px 3px 0 0;"></div>
<svg class="b" style="left:6px;top:494px;" width="14" height="10" viewBox="0 0 14 10"><path d="M3.6 1.2H10.4Q13.4 1.2 13.4 4.6Q13.4 8 11 8Q9.8 8 9 6.6H5Q4.2 8 3 8Q.6 8 .6 4.6Q.6 1.2 3.6 1.2Z" fill="#9d9d9d"/><path d="M3.8 3V6M2.3 4.5H5.3" stroke="#303030" stroke-width="1"/><circle cx="10.4" cy="4.5" r="1" fill="#303030"/></svg>
<span class="t " id="t18" style="left:23px;top:491.5px;color:#9d9d9d;font-size:12px;letter-spacing:0.104px;">Game</span>
<svg class="b" style="left:82px;top:493px;" width="11" height="12" viewBox="0 0 11 12"><rect x=".6" y=".6" width="9.8" height="10.8" rx="1" fill="#9d9d9d"/><path d="M2.2 3H8.8M2.2 5.4H8.8M2.2 7.8H8.8" stroke="#202020" stroke-width="1.1"/></svg>
<span class="t " id="t19" style="left:98px;top:491.5px;color:#9d9d9d;font-size:12px;letter-spacing:0.328px;">Console</span>
<svg class="b" style="left:883.5px;top:492.5px;" width="3" height="11" viewBox="0 0 3 11"><rect x=".5" y="0" width="2" height="2" fill="#9d9d9d"/><rect x=".5" y="4.4" width="2" height="2" fill="#9d9d9d"/><rect x=".5" y="8.8" width="2" height="2" fill="#9d9d9d"/></svg>
<div class="b " style="left:0px;top:508px;width:898px;height:20px;background:#303030;"></div>
<div class="b " style="left:90px;top:508px;width:1px;height:20px;background:#222222;"></div>
<div class="b " style="left:176px;top:508px;width:1px;height:20px;background:#222222;"></div>
<div class="b " style="left:337px;top:508px;width:1px;height:20px;background:#222222;"></div>
<div class="b " style="left:590px;top:508px;width:1px;height:20px;background:#222222;"></div>
<div class="b " style="left:700px;top:508px;width:1px;height:20px;background:#222222;"></div>
<div class="b " style="left:726px;top:508px;width:1px;height:20px;background:#222222;"></div>
<div class="b " style="left:738px;top:508px;width:1px;height:20px;background:#222222;"></div>
<div class="b " style="left:764px;top:508px;width:1px;height:20px;background:#222222;"></div>
<div class="b " style="left:790px;top:508px;width:1px;height:20px;background:#222222;"></div>
<div class="b " style="left:829px;top:508px;width:1px;height:20px;background:#222222;"></div>
<span class="t " id="t20" style="left:4px;top:510.5px;color:#9d9d9d;font-size:12px;letter-spacing:0.104px;">Game</span>
<svg class="b" style="left:77.5px;top:516.0px;" width="8" height="5" viewBox="0 0 8 5"><path d="M0 0H8L4.0 5Z" fill="#9d9d9d"/></svg>
<span class="t " id="t21" style="left:100px;top:510.5px;color:#9d9d9d;font-size:12px;letter-spacing:0.080px;">Display 1</span>
<svg class="b" style="left:163.5px;top:516.0px;" width="8" height="5" viewBox="0 0 8 5"><path d="M0 0H8L4.0 5Z" fill="#9d9d9d"/></svg>
<span class="t " id="t22" style="left:180px;top:510.5px;color:#9d9d9d;font-size:12px;letter-spacing:0.451px;">1080x1920</span>
<svg class="b" style="left:323.5px;top:516.0px;" width="8" height="5" viewBox="0 0 8 5"><path d="M0 0H8L4.0 5Z" fill="#9d9d9d"/></svg>
<span class="t " id="t23" style="left:343px;top:510.5px;color:#9d9d9d;font-size:12px;letter-spacing:0.492px;">Scale</span>
<div class="b " style="left:386px;top:518px;width:145px;height:1px;background:#4b4b4b;"></div>
<div class="b " style="left:381px;top:513.5px;width:10px;height:10px;background:#7a7a7a;border-radius:5px;"></div>
<span class="t " id="t24" style="left:537px;top:510.5px;color:#9d9d9d;font-size:12px;letter-spacing:0.660px;">0.25x</span>
<span class="t " id="t25" style="left:594px;top:510.5px;color:#585858;font-size:12px;letter-spacing:0.391px;">Play Focused</span>
<svg class="b" style="left:687.5px;top:516.0px;" width="8" height="5" viewBox="0 0 8 5"><path d="M0 0H8L4.0 5Z" fill="#585858"/></svg>
<svg class="b" style="left:704px;top:510px;" width="17" height="17" viewBox="0 0 17 17"><ellipse cx="8.5" cy="9.6" rx="4" ry="5" fill="#9d9d9d"/><path d="M5.4 3.2L7 5.4M11.6 3.2L10 5.4M1.4 6.4L4.8 8M15.6 6.4L12.2 8M1 10.6H4.6M16 10.6H12.4M1.8 15.4L5 12.8M15.2 15.4L12 12.8" stroke="#9d9d9d" stroke-width="1.2" fill="none"/><rect x="6.4" y="8.4" width="4.2" height="3.4" fill="#303030"/></svg>
<svg class="b" style="left:745px;top:512px;" width="14" height="12" viewBox="0 0 14 12"><path d="M1 4H3L6 1.4V10.6L3 8H1Z" fill="#9d9d9d"/><path d="M7.6 3.6Q9 6 7.6 8.4M9.6 2Q12 6 9.6 10" stroke="#9d9d9d" stroke-width="1.1" fill="none"/></svg>
<svg class="b" style="left:769px;top:513px;" width="15" height="11" viewBox="0 0 15 11"><rect x=".6" y=".6" width="13.8" height="9.4" fill="none" stroke="#9d9d9d" stroke-width="1.1"/><path d="M.6 3.6H14.4M.6 6.6H14.4M3.4 .6V6.6M6.2 .6V6.6M9 .6V6.6M11.8 .6V6.6M3.4 6.6V10M11.8 6.6V10" stroke="#9d9d9d" stroke-width=".9"/></svg>
<span class="t " id="t26" style="left:794px;top:510.5px;color:#9d9d9d;font-size:12px;letter-spacing:0.410px;">Stats</span>
<span class="t " id="t27" style="left:833px;top:510.5px;color:#9d9d9d;font-size:12px;letter-spacing:0.266px;">Gizmos</span>
<div class="b " style="left:880px;top:512px;width:1px;height:13px;background:#444444;"></div>
<svg class="b" style="left:884.5px;top:516.0px;" width="8" height="5" viewBox="0 0 8 5"><path d="M0 0H8L4.0 5Z" fill="#9d9d9d"/></svg>
<div class="b " style="left:0px;top:528px;width:898px;height:85px;background:#282828;"></div>
<div class="b " style="left:314px;top:528px;width:271px;height:85px;background:#232426;"></div>
<div class="b " style="left:0px;top:528px;width:898px;height:5px;background:transparent;background:linear-gradient(#141414cc,#1c1c1c00);"></div>
<div class="b " style="left:900px;top:73px;width:314px;height:19px;background:#202020;"></div>
<div class="b " style="left:900px;top:73px;width:96px;height:19px;background:#303030;border-radius:3px 3px 0 0;border-top:2px solid #25598b;"></div>
<svg class="b" style="left:908px;top:78px;" width="12" height="10" viewBox="0 0 12 10"><path d="M3.4 1.6H11.6M3.4 5H11.6M3.4 8.4H11.6" stroke="#9d9d9d" stroke-width="1.2"/><path d="M.4 1.6H2M1.2 .6V2.6" stroke="#9d9d9d" stroke-width="1"/></svg>
<span class="t " id="t28" style="left:924px;top:75.5px;color:#9d9d9d;font-size:12px;letter-spacing:0.330px;">Hierarchy</span>
<svg class="b" style="left:1179px;top:77px;" width="11" height="11" viewBox="0 0 11 11"><rect x="1.1" y="5.6" width="7.6" height="4.2" rx=".5" fill="none" stroke="#9d9d9d" stroke-width="1.1"/><path d="M2.6 5.4V3.3A2.2 2.2 0 0 1 7 3.3V4.2" fill="none" stroke="#9d9d9d" stroke-width="1.1"/></svg>
<svg class="b" style="left:1199.0px;top:77.0px;" width="3" height="11" viewBox="0 0 3 11"><rect x=".5" y="0" width="2" height="2" fill="#9d9d9d"/><rect x=".5" y="4.4" width="2" height="2" fill="#9d9d9d"/><rect x=".5" y="8.8" width="2" height="2" fill="#9d9d9d"/></svg>
<div class="b " style="left:900px;top:92px;width:314px;height:20px;background:#303030;border-bottom:1px solid #1c1c1c;"></div>
<svg class="b" style="left:907px;top:95.5px;" width="13" height="13" viewBox="0 0 13 13"><path d="M6.5 .4V12.6M.4 6.5H12.6" stroke="#9d9d9d" stroke-width="1.7"/></svg>
<svg class="b" style="left:924.0px;top:100.0px;" width="7" height="4" viewBox="0 0 7 4"><path d="M0 0H7L3.5 4Z" fill="#9d9d9d"/></svg>
<div class="b " style="left:943px;top:94px;width:250px;height:16px;background:#1d1d1d;border:1px solid #151515;border-radius:3px;"></div>
<svg class="b" style="left:948px;top:98px;" width="10" height="8" viewBox="0 0 10 8"><circle cx="2.8" cy="3" r="2" fill="none" stroke="#7b7b7b" stroke-width="1"/><path d="M4.2 4.6L6 6.6" stroke="#7b7b7b" stroke-width="1.1"/><path d="M6.4 2.4H9.4L7.9 4.2Z" fill="#7b7b7b"/></svg>
<span class="t " id="t29" style="left:962px;top:94px;color:#555555;font-size:12px;letter-spacing:-0.600px;">All</span>
<svg class="b" style="left:1196px;top:96px;" width="12" height="12" viewBox="0 0 12 12"><rect x=".6" y="3.6" width="7.8" height="7.8" fill="none" stroke="#868686" stroke-width="1"/><path d="M3.4 3.6V.6H11.4V8.6H8.4" fill="none" stroke="#868686" stroke-width="1"/><path d="M5 7L8.6 3.4M6.4 3.2H8.8V5.6" fill="none" stroke="#868686" stroke-width="1"/></svg>
<div class="b " style="left:900px;top:112px;width:314px;height:501px;background:#2d2d2d;"></div>
<div class="b " style="left:900px;top:112px;width:32px;height:501px;background:#282828;"></div>
<div class="b " style="left:900px;top:112px;width:314px;height:16px;background:#232323;border-bottom:1px solid #1d1d1d;"></div>
<svg class="b" style="left:933.5px;top:117.0px;" width="10" height="8" viewBox="0 0 10 8"><path d="M0 0H10L5 8Z" fill="#565656"/></svg>
<svg class="b" style="left:946.5px;top:113px;" width="15" height="15" viewBox="0 0 16 16"><path d="M8 2.1L13.2 5.05V10.95L8 13.9L2.8 10.95V5.05Z" fill="none" stroke="#b3b3b3" stroke-width="2.3" stroke-linejoin="miter"/><path d="M8 8V13.6M8 8L3.1 5.2M8 8L12.9 5.2" stroke="#b3b3b3" stroke-width="2.3" fill="none"/><path d="M8 0V3.6M1.2 12L4.2 10.2M14.8 12L11.8 10.2" stroke="#232323" stroke-width="1.3"/></svg>
<span class="t " id="t30" style="left:965px;top:112.5px;color:#adadad;font-size:12px;letter-spacing:0.182px;font-weight:bold;">Eight_Tree</span>
<svg class="b" style="left:1200.0px;top:115.0px;" width="3" height="11" viewBox="0 0 3 11"><rect x=".5" y="0" width="2" height="2" fill="#9d9d9d"/><rect x=".5" y="4.4" width="2" height="2" fill="#9d9d9d"/><rect x=".5" y="8.8" width="2" height="2" fill="#9d9d9d"/></svg>
<svg class="b" style="left:960px;top:129px;" width="16" height="16" viewBox="0 0 16 16"><path d="M8 1.6L14 4.8V11.4L8 14.6L2 11.4V4.8Z" fill="none" stroke="#9d9d9d" stroke-width="1.1" stroke-linejoin="round"/><path d="M2.2 4.9L8 8L13.8 4.9M8 8V14.4" fill="none" stroke="#9d9d9d" stroke-width="1.1"/></svg>
<span class="t " id="t31" style="left:978px;top:128.5px;color:#9d9d9d;font-size:12px;letter-spacing:0.197px;">Main Camera</span>
<svg class="b" style="left:960px;top:145px;" width="16" height="16" viewBox="0 0 16 16"><path d="M8 1.6L14 4.8V11.4L8 14.6L2 11.4V4.8Z" fill="none" stroke="#9d9d9d" stroke-width="1.1" stroke-linejoin="round"/><path d="M2.2 4.9L8 8L13.8 4.9M8 8V14.4" fill="none" stroke="#9d9d9d" stroke-width="1.1"/></svg>
<span class="t " id="t32" style="left:978px;top:144.5px;color:#9d9d9d;font-size:12px;letter-spacing:0.372px;">Directional Light</span>
<svg class="b" style="left:960px;top:161px;" width="16" height="16" viewBox="0 0 16 16"><path d="M8 1.6L14 4.8V11.4L8 14.6L2 11.4V4.8Z" fill="none" stroke="#9d9d9d" stroke-width="1.1" stroke-linejoin="round"/><path d="M2.2 4.9L8 8L13.8 4.9M8 8V14.4" fill="none" stroke="#9d9d9d" stroke-width="1.1"/></svg>
<span class="t " id="t33" style="left:978px;top:160.5px;color:#9d9d9d;font-size:12px;letter-spacing:0.438px;">Cube</span>
<svg class="b" style="left:960px;top:177px;" width="16" height="16" viewBox="0 0 16 16"><path d="M8 1.6L14 4.8V11.4L8 14.6L2 11.4V4.8Z" fill="none" stroke="#9d9d9d" stroke-width="1.1" stroke-linejoin="round"/><path d="M2.2 4.9L8 8L13.8 4.9M8 8V14.4" fill="none" stroke="#9d9d9d" stroke-width="1.1"/></svg>
<span class="t " id="t34" style="left:978px;top:176.5px;color:#9d9d9d;font-size:12px;letter-spacing:0.188px;">Cube (2)</span>
<svg class="b" style="left:960px;top:193px;" width="16" height="16" viewBox="0 0 16 16"><path d="M8 1.6L14 4.8V11.4L8 14.6L2 11.4V4.8Z" fill="none" stroke="#9d9d9d" stroke-width="1.1" stroke-linejoin="round"/><path d="M2.2 4.9L8 8L13.8 4.9M8 8V14.4" fill="none" stroke="#9d9d9d" stroke-width="1.1"/></svg>
<span class="t " id="t35" style="left:978px;top:192.5px;color:#9d9d9d;font-size:12px;letter-spacing:0.330px;">Cube (3)</span>
<svg class="b" style="left:960px;top:209px;" width="16" height="16" viewBox="0 0 16 16"><path d="M8 1.6L14 4.8V11.4L8 14.6L2 11.4V4.8Z" fill="none" stroke="#9d9d9d" stroke-width="1.1" stroke-linejoin="round"/><path d="M2.2 4.9L8 8L13.8 4.9M8 8V14.4" fill="none" stroke="#9d9d9d" stroke-width="1.1"/></svg>
<span class="t " id="t36" style="left:978px;top:208.5px;color:#9d9d9d;font-size:12px;letter-spacing:0.045px;">Cube (1)</span>
<div class="b " style="left:900px;top:225px;width:314px;height:16px;background:#234a6c;"></div>
<div class="b " style="left:900px;top:225px;width:32px;height:16px;background:#224261;"></div>
<svg class="b" style="left:960px;top:225px;" width="16" height="16" viewBox="0 0 16 16"><path d="M8 1.6L14 4.8V11.4L8 14.6L2 11.4V4.8Z" fill="none" stroke="#aeaeae" stroke-width="1.1" stroke-linejoin="round"/><path d="M2.2 4.9L8 8L13.8 4.9M8 8V14.4" fill="none" stroke="#aeaeae" stroke-width="1.1"/></svg>
<span class="t " id="t37" style="left:978px;top:224.5px;color:#cccccc;font-size:12px;letter-spacing:0.407px;">PresientObject</span>
<div class="b " style="left:1216px;top:73px;width:273px;height:19px;background:#202020;"></div>
<div class="b " style="left:1216px;top:73px;width:81px;height:19px;background:#303030;border-radius:3px 3px 0 0;"></div>
<svg class="b" style="left:1224px;top:77px;" width="12" height="10" viewBox="0 0 12 10"><path d="M.4 1.2Q.4 .4 1.2 .4H4.6L5.8 1.8H10.8Q11.6 1.8 11.6 2.6V9.2Q11.6 10 10.8 10H1.2Q.4 10 .4 9.2Z" fill="#9d9d9d"/></svg>
<span class="t " id="t38" style="left:1240px;top:75.5px;color:#9d9d9d;font-size:12px;letter-spacing:0.440px;">Project</span>
<svg class="b" style="left:1454px;top:77px;" width="11" height="11" viewBox="0 0 11 11"><rect x="1.1" y="5.6" width="7.6" height="4.2" rx=".5" fill="none" stroke="#9d9d9d" stroke-width="1.1"/><path d="M2.6 5.4V3.3A2.2 2.2 0 0 1 7 3.3V4.2" fill="none" stroke="#9d9d9d" stroke-width="1.1"/></svg>
<svg class="b" style="left:1474.0px;top:77.0px;" width="3" height="11" viewBox="0 0 3 11"><rect x=".5" y="0" width="2" height="2" fill="#9d9d9d"/><rect x=".5" y="4.4" width="2" height="2" fill="#9d9d9d"/><rect x=".5" y="8.8" width="2" height="2" fill="#9d9d9d"/></svg>
<div class="b " style="left:1216px;top:92px;width:273px;height:20px;background:#303030;border-bottom:1px solid #1c1c1c;"></div>
<svg class="b" style="left:1222px;top:95.5px;" width="13" height="13" viewBox="0 0 13 13"><path d="M6.5 .4V12.6M.4 6.5H12.6" stroke="#9d9d9d" stroke-width="1.7"/></svg>
<svg class="b" style="left:1239.5px;top:100.0px;" width="7" height="4" viewBox="0 0 7 4"><path d="M0 0H7L3.5 4Z" fill="#9d9d9d"/></svg>
<div class="b " style="left:1261px;top:94px;width:90px;height:16px;background:#1d1d1d;border:1px solid #151515;border-radius:3px;"></div>
<svg class="b" style="left:1265px;top:98px;" width="8" height="8" viewBox="0 0 8 8"><circle cx="3" cy="3" r="2.1" fill="none" stroke="#7b7b7b" stroke-width="1"/><path d="M4.6 4.6L6.8 6.8" stroke="#7b7b7b" stroke-width="1.2"/></svg>
<svg class="b" style="left:1353px;top:96px;" width="12" height="12" viewBox="0 0 12 12"><rect x=".6" y="3.6" width="7.8" height="7.8" fill="none" stroke="#868686" stroke-width="1"/><path d="M3.4 3.6V.6H11.4V8.6H8.4" fill="none" stroke="#868686" stroke-width="1"/><path d="M5 7L8.6 3.4M6.4 3.2H8.8V5.6" fill="none" stroke="#868686" stroke-width="1"/></svg>
<div class="b " style="left:1370px;top:92px;width:1px;height:19px;background:#222222;"></div>
<div class="b " style="left:1396px;top:92px;width:1px;height:19px;background:#222222;"></div>
<div class="b " style="left:1422px;top:92px;width:1px;height:19px;background:#222222;"></div>
<div class="b " style="left:1448px;top:92px;width:1px;height:19px;background:#222222;"></div>
<svg class="b" style="left:1376px;top:95px;" width="14" height="14" viewBox="0 0 14 14"><circle cx="4" cy="9.6" r="3.2" fill="#9d9d9d"/><path d="M4.6 1H8.8V5.2H4.6Z" fill="#9d9d9d" transform="rotate(-8 6 3)"/><path d="M10.4 3.6L13.6 10.4H7.6Z" fill="#9d9d9d"/></svg>
<svg class="b" style="left:1402px;top:96px;" width="14" height="12" viewBox="0 0 14 12"><path d="M6.4 1L12.6 .8L12.8 6.4L6.6 11.4L1.4 6Z" fill="#9d9d9d" transform="rotate(8 7 6)"/><circle cx="10.4" cy="3.4" r="1.1" fill="#303030"/></svg>
<svg class="b" style="left:1428px;top:95px;" width="14" height="14" viewBox="0 0 14 14"><circle cx="7" cy="7" r="6.2" fill="#9d9d9d"/><path d="M7 3V8.2" stroke="#303030" stroke-width="1.8"/><circle cx="7" cy="10.6" r="1.05" fill="#303030"/></svg>
<svg class="b" style="left:1453px;top:97px;" width="16" height="10" viewBox="0 0 16 10"><path d="M.8 5Q4 .8 8 .8Q12 .8 15.2 5Q12 9.2 8 9.2Q4 9.2 .8 5Z" fill="none" stroke="#585858" stroke-width="1.1"/><circle cx="8" cy="5" r="2.6" fill="#585858"/></svg>
<span class="t " id="t39" style="left:1469px;top:94.5px;color:#7b7b7b;font-size:12px;letter-spacing:0.641px;">14</span>
<div class="b " style="left:1216px;top:112px;width:273px;height:501px;background:#2d2d2d;"></div>
<svg class="b" style="left:1219.5px;top:121.5px;" width="10" height="8" viewBox="0 0 10 8"><path d="M0 0H10L5 8Z" fill="#565656"/></svg>
<svg class="b" style="left:1234px;top:117px;" width="16" height="16" viewBox="0 0 16 16"><path d="M.4 4Q.4 3.2 1.2 3.2H4.6L5.9 4.7H10.8Q11.6 4.7 11.6 5.5V6.3H3.8Q3.1 6.3 2.8 7L.4 12Z" fill="#9b9b9b"/><path d="M4 7.2H13.4Q14.1 7.2 13.8 7.9L12 12.5Q11.8 13 11.2 13H.9L3.3 7.7Q3.5 7.2 4 7.2Z" fill="#9b9b9b"/></svg>
<span class="t " id="t40" style="left:1251px;top:117px;color:#a6a6a6;font-size:12px;letter-spacing:0.528px;font-weight:bold;">Assets</span>
<svg class="b" style="left:1233.5px;top:137.5px;" width="10" height="8" viewBox="0 0 10 8"><path d="M0 0H10L5 8Z" fill="#565656"/></svg>
<svg class="b" style="left:1248px;top:133px;" width="16" height="16" viewBox="0 0 16 16"><path d="M.4 4Q.4 3.2 1.2 3.2H4.6L5.9 4.7H10.8Q11.6 4.7 11.6 5.5V6.3H3.8Q3.1 6.3 2.8 7L.4 12Z" fill="#9b9b9b"/><path d="M4 7.2H13.4Q14.1 7.2 13.8 7.9L12 12.5Q11.8 13 11.2 13H.9L3.3 7.7Q3.5 7.2 4 7.2Z" fill="#9b9b9b"/></svg>
<span class="t " id="t41" style="left:1264px;top:133px;color:#9d9d9d;font-size:12px;letter-spacing:0.473px;">Material</span>
<svg class="b" style="left:1260px;top:148px;" width="16" height="16" viewBox="0 0 16 16"><circle cx="7.5" cy="8.4" r="5.9" fill="#22323d" stroke="#599ab8" stroke-width="1.2"/><circle cx="6.3" cy="7.1" r="3.9" fill="#63a2c0"/></svg>
<span class="t " id="t42" style="left:1278px;top:149px;color:#9d9d9d;font-size:12px;letter-spacing:0.414px;">Built</span>
<svg class="b" style="left:1260px;top:164px;" width="16" height="16" viewBox="0 0 16 16"><circle cx="7.5" cy="8.4" r="5.9" fill="#22323d" stroke="#599ab8" stroke-width="1.2"/><circle cx="6.3" cy="7.1" r="3.9" fill="#63a2c0"/></svg>
<span class="t " id="t43" style="left:1278px;top:165px;color:#9d9d9d;font-size:12px;letter-spacing:0.438px;">Cube</span>
<svg class="b" style="left:1260px;top:180px;" width="16" height="16" viewBox="0 0 16 16"><circle cx="7.5" cy="8.4" r="5.9" fill="#22323d" stroke="#599ab8" stroke-width="1.2"/><circle cx="6.3" cy="7.1" r="3.9" fill="#63a2c0"/></svg>
<span class="t " id="t44" style="left:1278px;top:181px;color:#9d9d9d;font-size:12px;letter-spacing:0.324px;">Plane</span>
<svg class="b" style="left:1233.5px;top:201.5px;" width="10" height="8" viewBox="0 0 10 8"><path d="M0 0H10L5 8Z" fill="#565656"/></svg>
<svg class="b" style="left:1248px;top:197px;" width="16" height="16" viewBox="0 0 16 16"><path d="M.4 4Q.4 3.2 1.2 3.2H4.6L5.9 4.7H10.8Q11.6 4.7 11.6 5.5V6.3H3.8Q3.1 6.3 2.8 7L.4 12Z" fill="#9b9b9b"/><path d="M4 7.2H13.4Q14.1 7.2 13.8 7.9L12 12.5Q11.8 13 11.2 13H.9L3.3 7.7Q3.5 7.2 4 7.2Z" fill="#9b9b9b"/></svg>
<span class="t " id="t45" style="left:1264px;top:197px;color:#9d9d9d;font-size:12px;letter-spacing:0.394px;">Scenes</span>
<svg class="b" style="left:1260px;top:212.5px;" width="16" height="16" viewBox="0 0 16 16"><path d="M8 2.1L13.2 5.05V10.95L8 13.9L2.8 10.95V5.05Z" fill="none" stroke="#b3b3b3" stroke-width="2.3" stroke-linejoin="miter"/><path d="M8 8V13.6M8 8L3.1 5.2M8 8L12.9 5.2" stroke="#b3b3b3" stroke-width="2.3" fill="none"/><path d="M8 0V3.6M1.2 12L4.2 10.2M14.8 12L11.8 10.2" stroke="#2d2d2d" stroke-width="1.3"/></svg>
<span class="t " id="t46" style="left:1278px;top:213px;color:#9d9d9d;font-size:12px;letter-spacing:0.082px;">Eight_Tree</span>
<svg class="b" style="left:1260px;top:228.5px;" width="16" height="16" viewBox="0 0 16 16"><path d="M8 2.1L13.2 5.05V10.95L8 13.9L2.8 10.95V5.05Z" fill="none" stroke="#b3b3b3" stroke-width="2.3" stroke-linejoin="miter"/><path d="M8 8V13.6M8 8L3.1 5.2M8 8L12.9 5.2" stroke="#b3b3b3" stroke-width="2.3" fill="none"/><path d="M8 0V3.6M1.2 12L4.2 10.2M14.8 12L11.8 10.2" stroke="#2d2d2d" stroke-width="1.3"/></svg>
<span class="t " id="t47" style="left:1278px;top:229px;color:#9d9d9d;font-size:12px;letter-spacing:0.328px;">SampleScene</span>
<svg class="b" style="left:1233.5px;top:249.5px;" width="10" height="8" viewBox="0 0 10 8"><path d="M0 0H10L5 8Z" fill="#565656"/></svg>
<svg class="b" style="left:1248px;top:245px;" width="16" height="16" viewBox="0 0 16 16"><path d="M.4 4Q.4 3.2 1.2 3.2H4.6L5.9 4.7H10.8Q11.6 4.7 11.6 5.5V6.3H3.8Q3.1 6.3 2.8 7L.4 12Z" fill="#9b9b9b"/><path d="M4 7.2H13.4Q14.1 7.2 13.8 7.9L12 12.5Q11.8 13 11.2 13H.9L3.3 7.7Q3.5 7.2 4 7.2Z" fill="#9b9b9b"/></svg>
<span class="t " id="t48" style="left:1264px;top:245px;color:#9d9d9d;font-size:12px;letter-spacing:0.463px;">Script</span>
<svg class="b" style="left:1247.5px;top:265.5px;" width="10" height="8" viewBox="0 0 10 8"><path d="M0 0H10L5 8Z" fill="#565656"/></svg>
<svg class="b" style="left:1262px;top:261px;" width="16" height="16" viewBox="0 0 16 16"><path d="M.4 4Q.4 3.2 1.2 3.2H4.6L5.9 4.7H10.8Q11.6 4.7 11.6 5.5V6.3H3.8Q3.1 6.3 2.8 7L.4 12Z" fill="#9b9b9b"/><path d="M4 7.2H13.4Q14.1 7.2 13.8 7.9L12 12.5Q11.8 13 11.2 13H.9L3.3 7.7Q3.5 7.2 4 7.2Z" fill="#9b9b9b"/></svg>
<span class="t " id="t49" style="left:1278px;top:261px;color:#9d9d9d;font-size:12px;letter-spacing:0.082px;">Eight_Tree</span>
<svg class="b" style="left:1262.5px;top:280px;" width="8" height="10" viewBox="0 0 8 10"><path d="M0 0V10L8 5Z" fill="#565656"/></svg>
<svg class="b" style="left:1276px;top:277px;" width="16" height="16" viewBox="0 0 16 16"><path d="M.6 4Q.6 3.2 1.4 3.2H4.9L6.2 4.7H12.2Q13 4.7 13 5.5V12.3Q13 13 12.2 13H1.4Q.6 13 .6 12.3Z" fill="#9b9b9b"/></svg>
<span class="t " id="t50" style="left:1292px;top:277px;color:#9d9d9d;font-size:12px;letter-spacing:0.128px;">Editor</span>
<svg class="b" style="left:1276px;top:293px;" width="16" height="16" viewBox="0 0 16 16"><g><path d="M2.6 1.4H10.2L13.4 4.6V14.6H2.6Z" fill="#b6b6b6"/><path d="M10.2 1.4V4.6H13.4Z" fill="#868686"/><path d="M6.4 5.4L5.6 12.6M9.6 5.4L8.8 12.6M4.3 7.6H11.6M4 10.4H11.3" stroke="#266429" stroke-width="1.25" fill="none"/></g></svg>
<span class="t " id="t51" style="left:1292px;top:293px;color:#9d9d9d;font-size:12px;letter-spacing:0.386px;">CreatOctreeTree</span>
<svg class="b" style="left:1262px;top:309px;" width="16" height="16" viewBox="0 0 16 16"><g><path d="M2.6 1.4H10.2L13.4 4.6V14.6H2.6Z" fill="#b6b6b6"/><path d="M10.2 1.4V4.6H13.4Z" fill="#868686"/><path d="M6.4 5.4L5.6 12.6M9.6 5.4L8.8 12.6M4.3 7.6H11.6M4 10.4H11.3" stroke="#266429" stroke-width="1.25" fill="none"/></g></svg>
<span class="t " id="t52" style="left:1278px;top:309px;color:#9d9d9d;font-size:12px;letter-spacing:0.359px;">EventManager</span>
<svg class="b" style="left:1262px;top:325px;" width="16" height="16" viewBox="0 0 16 16"><g><path d="M2.6 1.4H10.2L13.4 4.6V14.6H2.6Z" fill="#b6b6b6"/><path d="M10.2 1.4V4.6H13.4Z" fill="#868686"/><path d="M6.4 5.4L5.6 12.6M9.6 5.4L8.8 12.6M4.3 7.6H11.6M4 10.4H11.3" stroke="#266429" stroke-width="1.25" fill="none"/></g></svg>
<span class="t " id="t53" style="left:1278px;top:325px;color:#9d9d9d;font-size:12px;letter-spacing:0.330px;">PlayerController</span>
<svg class="b" style="left:1262px;top:341px;" width="16" height="16" viewBox="0 0 16 16"><g><path d="M2.6 1.4H10.2L13.4 4.6V14.6H2.6Z" fill="#b6b6b6"/><path d="M10.2 1.4V4.6H13.4Z" fill="#868686"/><path d="M6.4 5.4L5.6 12.6M9.6 5.4L8.8 12.6M4.3 7.6H11.6M4 10.4H11.3" stroke="#266429" stroke-width="1.25" fill="none"/></g></svg>
<span class="t " id="t54" style="left:1278px;top:341px;color:#9d9d9d;font-size:12px;letter-spacing:0.352px;">RebackController</span>
<svg class="b" style="left:1248px;top:357px;" width="16" height="16" viewBox="0 0 16 16"><path d="M8 1.2L14.4 4.4L8 7.8L1.6 4.4Z" fill="#72aac2"/><path d="M1.6 4.4L8 7.8V15L1.6 11.6Z" fill="#4c8eb0"/><path d="M14.4 4.4L8 7.8V15L14.4 11.6Z" fill="#31729a"/></svg>
<span class="t " id="t55" style="left:1264px;top:357px;color:#9d9d9d;font-size:12px;letter-spacing:0.438px;">Cube</span>
<svg class="b" style="left:1220.5px;top:376px;" width="8" height="10" viewBox="0 0 8 10"><path d="M0 0V10L8 5Z" fill="#565656"/></svg>
<svg class="b" style="left:1234px;top:373px;" width="16" height="16" viewBox="0 0 16 16"><path d="M.6 4Q.6 3.2 1.4 3.2H4.9L6.2 4.7H12.2Q13 4.7 13 5.5V12.3Q13 13 12.2 13H1.4Q.6 13 .6 12.3Z" fill="#9b9b9b"/></svg>
<span class="t " id="t56" style="left:1251px;top:373px;color:#a6a6a6;font-size:12px;letter-spacing:0.230px;font-weight:bold;">Packages</span>
<div class="b " style="left:1491px;top:73px;width:429px;height:19px;background:#202020;"></div>
<div class="b " style="left:1491px;top:73px;width:93px;height:19px;background:#303030;border-radius:3px 3px 0 0;"></div>
<svg class="b" style="left:1500px;top:78px;" width="10" height="10" viewBox="0 0 10 10"><circle cx="5" cy="5" r="4.8" fill="#9d9d9d"/><path d="M5 4.2V7.8" stroke="#303030" stroke-width="1.5"/><circle cx="5" cy="2.5" r=".9" fill="#303030"/></svg>
<span class="t " id="t57" style="left:1515px;top:75.5px;color:#9d9d9d;font-size:12px;letter-spacing:0.330px;">Inspector</span>
<svg class="b" style="left:1884px;top:77px;" width="11" height="11" viewBox="0 0 11 11"><rect x="1.1" y="5.6" width="7.6" height="4.2" rx=".5" fill="none" stroke="#9d9d9d" stroke-width="1.1"/><path d="M2.6 5.4V3.3A2.2 2.2 0 0 1 7 3.3V4.2" fill="none" stroke="#9d9d9d" stroke-width="1.1"/></svg>
<svg class="b" style="left:1904.0px;top:77.0px;" width="3" height="11" viewBox="0 0 3 11"><rect x=".5" y="0" width="2" height="2" fill="#9d9d9d"/><rect x=".5" y="4.4" width="2" height="2" fill="#9d9d9d"/><rect x=".5" y="8.8" width="2" height="2" fill="#9d9d9d"/></svg>
<div class="b " style="left:1491px;top:92px;width:429px;height:521px;background:#2d2d2d;"></div>
<svg class="b" style="left:1496.6px;top:101px;" width="24" height="24" viewBox="0 0 16 16"><path d="M8 1.6L14 4.8V11.4L8 14.6L2 11.4V4.8Z" fill="none" stroke="#9d9d9d" stroke-width="1.1" stroke-linejoin="round"/><path d="M2.2 4.9L8 8L13.8 4.9M8 8V14.4" fill="none" stroke="#9d9d9d" stroke-width="1.1"/></svg>
<svg class="b" style="left:1518.0px;top:124.0px;" width="6" height="4" viewBox="0 0 6 4"><path d="M0 0H6L3.0 4Z" fill="#9d9d9d"/></svg>
<div class="b " style="left:1538px;top:103px;width:14px;height:14px;background:#222222;border:1px solid #1a1a1a;border-top-color:#0a0a0a;border-radius:3px;"></div>
<svg class="b" style="left:1540px;top:105.5px;" width="10" height="9" viewBox="0 0 10 9"><path d="M1.4 4.6L3.9 7.2L8.8 1.6" fill="none" stroke="#b3b3b3" stroke-width="1.5"/></svg>
<div class="b " style="left:1558px;top:101px;width:282px;height:18px;background:#222222;border:1px solid #1a1a1a;border-top-color:#0a0a0a;border-radius:3px;"></div>
<span class="t " id="t58" style="left:1561px;top:102.5px;color:#a8a8a8;font-size:12px;letter-spacing:0.100px;font-weight:bold;">PresientObject</span>
<div class="b " style="left:1843px;top:103px;width:14px;height:14px;background:#222222;border:1px solid #1a1a1a;border-top-color:#0a0a0a;border-radius:3px;"></div>
<span class="t " id="t59" style="left:1861px;top:102.5px;color:#9d9d9d;font-size:12px;letter-spacing:0.397px;">Static</span>
<svg class="b" style="left:1905.5px;top:108.0px;" width="8" height="5" viewBox="0 0 8 5"><path d="M0 0H8L4.0 5Z" fill="#9d9d9d"/></svg>
<span class="t " id="t60" style="left:1531px;top:126.5px;color:#9d9d9d;font-size:12px;letter-spacing:0.820px;">Tag</span>
<div class="b " style="left:1557px;top:125px;width:160px;height:17px;background:#414141;border:1px solid #262626;border-radius:3px;"></div>
<span class="t " id="t61" style="left:1561px;top:126px;color:#9d9d9d;font-size:12px;letter-spacing:0.279px;">Untagged</span>
<svg class="b" style="left:1702.5px;top:131.5px;" width="8" height="5" viewBox="0 0 8 5"><path d="M0 0H8L4.0 5Z" fill="#9d9d9d"/></svg>
<span class="t " id="t62" style="left:1730px;top:126.5px;color:#9d9d9d;font-size:12px;letter-spacing:0.492px;">Layer</span>
<div class="b " style="left:1766px;top:125px;width:149px;height:17px;background:#414141;border:1px solid #262626;border-radius:3px;"></div>
<span class="t " id="t63" style="left:1770px;top:126px;color:#9d9d9d;font-size:12px;letter-spacing:0.661px;">Default</span>
<svg class="b" style="left:1901.0px;top:131.5px;" width="8" height="5" viewBox="0 0 8 5"><path d="M0 0H8L4.0 5Z" fill="#9d9d9d"/></svg>
<div class="b " style="left:1491px;top:151px;width:429px;height:1px;background:#151515;"></div>
<div class="b " style="left:1491px;top:152px;width:429px;height:21px;background:#323232;"></div>
<svg class="b" style="left:1496.5px;top:159.5px;" width="10" height="8" viewBox="0 0 10 8"><path d="M0 0H10L5 8Z" fill="#565656"/></svg>
<span class="t " id="t64" style="left:1551px;top:154.5px;color:#a8a8a8;font-size:12px;letter-spacing:0.289px;font-weight:bold;">Transform</span>
<svg class="b" style="left:1861px;top:156px;" width="11" height="11" viewBox="0 0 11 11"><circle cx="5.5" cy="5.5" r="5.2" fill="#9d9d9d"/><path d="M3.8 4.4Q3.8 2.8 5.5 2.8Q7.2 2.8 7.2 4.3Q7.2 5.2 6.2 5.8Q5.5 6.2 5.5 7" fill="none" stroke="#323232" stroke-width="1.3"/><circle cx="5.5" cy="8.6" r=".8" fill="#323232"/></svg>
<svg class="b" style="left:1881px;top:156px;" width="12" height="11" viewBox="0 0 12 11"><path d="M.4 3H6M8.4 3H11.6M.4 8H3.6M6 8H11.6" stroke="#9d9d9d" stroke-width="1.1"/><path d="M7.2 .6V5.4M4.8 5.6V10.4" stroke="#9d9d9d" stroke-width="1.3"/></svg>
<svg class="b" style="left:1905.0px;top:156.0px;" width="3" height="11" viewBox="0 0 3 11"><rect x=".5" y="0" width="2" height="2" fill="#9d9d9d"/><rect x=".5" y="4.4" width="2" height="2" fill="#9d9d9d"/><rect x=".5" y="8.8" width="2" height="2" fill="#9d9d9d"/></svg>
<svg class="b" style="left:1511px;top:154px;" width="17" height="17" viewBox="0 0 17 17"><path d="M8.3 2.2V8.2" stroke="#7bb23b" stroke-width="2.6" stroke-linecap="round"/><path d="M7.2 9.8L3 12.2" stroke="#4e9abb" stroke-width="2.6" stroke-linecap="round"/><path d="M9.6 9.8L13.8 12.2" stroke="#ba4e2e" stroke-width="2.6" stroke-linecap="round"/></svg>
<span class="t " id="t65" style="left:1510px;top:178.5px;color:#9d9d9d;font-size:12px;letter-spacing:0.328px;">Position</span>
<span class="t " id="t66" style="left:1665px;top:178.5px;color:#9d9d9d;font-size:12px;">X</span>
<div class="b " style="left:1679px;top:177px;width:66px;height:18px;background:#222222;border:1px solid #1a1a1a;border-top-color:#0a0a0a;border-radius:3px;"></div>
<span class="t " id="t67" style="left:1682px;top:178.5px;color:#9d9d9d;font-size:12px;letter-spacing:0.562px;">103.9705</span>
<span class="t " id="t68" style="left:1750px;top:178.5px;color:#9d9d9d;font-size:12px;">Y</span>
<div class="b " style="left:1764px;top:177px;width:66px;height:18px;background:#222222;border:1px solid #1a1a1a;border-top-color:#0a0a0a;border-radius:3px;"></div>
<span class="t " id="t69" style="left:1767px;top:178.5px;color:#9d9d9d;font-size:12px;letter-spacing:0.705px;">3.406683</span>
<span class="t " id="t70" style="left:1836px;top:178.5px;color:#9d9d9d;font-size:12px;">Z</span>
<div class="b " style="left:1850px;top:177px;width:66px;height:18px;background:#222222;border:1px solid #1a1a1a;border-top-color:#0a0a0a;border-radius:3px;"></div>
<span class="t " id="t71" style="left:1853px;top:178.5px;color:#9d9d9d;font-size:12px;letter-spacing:0.562px;">3.452577</span>
<span class="t " id="t72" style="left:1510px;top:198.5px;color:#9d9d9d;font-size:12px;letter-spacing:0.328px;">Rotation</span>
<span class="t " id="t73" style="left:1665px;top:198.5px;color:#9d9d9d;font-size:12px;">X</span>
<div class="b " style="left:1679px;top:197px;width:66px;height:18px;background:#222222;border:1px solid #1a1a1a;border-top-color:#0a0a0a;border-radius:3px;"></div>
<span class="t " id="t74" style="left:1682px;top:198.5px;color:#9d9d9d;font-size:12px;">0</span>
<span class="t " id="t75" style="left:1750px;top:198.5px;color:#9d9d9d;font-size:12px;">Y</span>
<div class="b " style="left:1764px;top:197px;width:66px;height:18px;background:#222222;border:1px solid #1a1a1a;border-top-color:#0a0a0a;border-radius:3px;"></div>
<span class="t " id="t76" style="left:1767px;top:198.5px;color:#9d9d9d;font-size:12px;">0</span>
<span class="t " id="t77" style="left:1836px;top:198.5px;color:#9d9d9d;font-size:12px;">Z</span>
<div class="b " style="left:1850px;top:197px;width:66px;height:18px;background:#222222;border:1px solid #1a1a1a;border-top-color:#0a0a0a;border-radius:3px;"></div>
<span class="t " id="t78" style="left:1853px;top:198.5px;color:#9d9d9d;font-size:12px;">0</span>
<span class="t " id="t79" style="left:1510px;top:218.5px;color:#9d9d9d;font-size:12px;letter-spacing:0.492px;">Scale</span>
<span class="t " id="t80" style="left:1665px;top:218.5px;color:#9d9d9d;font-size:12px;">X</span>
<div class="b " style="left:1679px;top:217px;width:66px;height:18px;background:#222222;border:1px solid #1a1a1a;border-top-color:#0a0a0a;border-radius:3px;"></div>
<span class="t " id="t81" style="left:1682px;top:218.5px;color:#9d9d9d;font-size:12px;">1</span>
<span class="t " id="t82" style="left:1750px;top:218.5px;color:#9d9d9d;font-size:12px;">Y</span>
<div class="b " style="left:1764px;top:217px;width:66px;height:18px;background:#222222;border:1px solid #1a1a1a;border-top-color:#0a0a0a;border-radius:3px;"></div>
<span class="t " id="t83" style="left:1767px;top:218.5px;color:#9d9d9d;font-size:12px;">1</span>
<span class="t " id="t84" style="left:1836px;top:218.5px;color:#9d9d9d;font-size:12px;">Z</span>
<div class="b " style="left:1850px;top:217px;width:66px;height:18px;background:#222222;border:1px solid #1a1a1a;border-top-color:#0a0a0a;border-radius:3px;"></div>
<span class="t " id="t85" style="left:1853px;top:218.5px;color:#9d9d9d;font-size:12px;">1</span>
<svg class="b" style="left:1642px;top:220px;" width="14" height="12" viewBox="0 0 14 12"><path d="M1 5.6Q2.4 2.6 5.4 2.6H8.6Q11.6 2.6 12.6 5.6Q11.6 8.6 8.6 8.6H5.4Q2.4 8.6 1 5.6Z" fill="none" stroke="#9d9d9d" stroke-width="1.1"/><path d="M2 1L12 10.6" stroke="#2d2d2d" stroke-width="2.6"/><path d="M2 1L12 10.6" stroke="#9d9d9d" stroke-width="1.1"/></svg>
<div class="b " style="left:1491px;top:244px;width:429px;height:1px;background:#151515;"></div>
<div class="b " style="left:1491px;top:245px;width:429px;height:21px;background:#323232;"></div>
<svg class="b" style="left:1496.5px;top:252.5px;" width="10" height="8" viewBox="0 0 10 8"><path d="M0 0H10L5 8Z" fill="#565656"/></svg>
<span class="t " id="t86" style="left:1551px;top:247.5px;color:#a8a8a8;font-size:12px;letter-spacing:0.384px;font-weight:bold;">Creat Octree Tree (Script)</span>
<svg class="b" style="left:1861px;top:249px;" width="11" height="11" viewBox="0 0 11 11"><circle cx="5.5" cy="5.5" r="5.2" fill="#9d9d9d"/><path d="M3.8 4.4Q3.8 2.8 5.5 2.8Q7.2 2.8 7.2 4.3Q7.2 5.2 6.2 5.8Q5.5 6.2 5.5 7" fill="none" stroke="#323232" stroke-width="1.3"/><circle cx="5.5" cy="8.6" r=".8" fill="#323232"/></svg>
<svg class="b" style="left:1881px;top:249px;" width="12" height="11" viewBox="0 0 12 11"><path d="M.4 3H6M8.4 3H11.6M.4 8H3.6M6 8H11.6" stroke="#9d9d9d" stroke-width="1.1"/><path d="M7.2 .6V5.4M4.8 5.6V10.4" stroke="#9d9d9d" stroke-width="1.3"/></svg>
<svg class="b" style="left:1905.0px;top:249.0px;" width="3" height="11" viewBox="0 0 3 11"><rect x=".5" y="0" width="2" height="2" fill="#9d9d9d"/><rect x=".5" y="4.4" width="2" height="2" fill="#9d9d9d"/><rect x=".5" y="8.8" width="2" height="2" fill="#9d9d9d"/></svg>
<svg class="b" style="left:1511px;top:247px;" width="16" height="16" viewBox="0 0 16 16"><g><path d="M2.6 1.4H10.2L13.4 4.6V14.6H2.6Z" fill="#b6b6b6"/><path d="M10.2 1.4V4.6H13.4Z" fill="#868686"/><path d="M6.4 5.4L5.6 12.6M9.6 5.4L8.8 12.6M4.3 7.6H11.6M4 10.4H11.3" stroke="#266429" stroke-width="1.25" fill="none"/></g></svg>
<span class="t " id="t87" style="left:1510px;top:271.5px;color:#626262;font-size:12px;letter-spacing:0.463px;">Script</span>
<div class="b " style="left:1664px;top:271px;width:251px;height:17px;background:#292929;border:1px solid #1e1e1e;border-radius:3px;"></div>
<svg class="b" style="left:1666.5px;top:273.5px;" width="12" height="12" viewBox="0 0 16 16"><g opacity=".5"><path d="M2.6 1.4H10.2L13.4 4.6V14.6H2.6Z" fill="#b6b6b6"/><path d="M10.2 1.4V4.6H13.4Z" fill="#868686"/><path d="M6.4 5.4L5.6 12.6M9.6 5.4L8.8 12.6M4.3 7.6H11.6M4 10.4H11.3" stroke="#266429" stroke-width="1.25" fill="none"/></g></svg>
<!-- -->
<span class="t " id="t88" style="left:1680px;top:271.5px;color:#626262;font-size:12px;letter-spacing:0.386px;">CreatOctreeTree</span>
<svg class="b" style="left:1899.5px;top:273.5px;" width="12" height="12" viewBox="0 0 12 12"><circle cx="6" cy="6" r="4.6" fill="none" stroke="#6e6e6e" stroke-width="1.1"/><circle cx="6" cy="6" r="1.7" fill="#6e6e6e"/></svg>
<span class="t " id="t89" style="left:1510px;top:291.5px;color:#9d9d9d;font-size:12px;letter-spacing:-0.005px;">Is See One</span>
<div class="b " style="left:1664px;top:292px;width:14px;height:14px;background:#222222;border:1px solid #1a1a1a;border-top-color:#0a0a0a;border-radius:3px;"></div>
<svg class="b" style="left:1666px;top:294.5px;" width="10" height="9" viewBox="0 0 10 9"><path d="M1.4 4.6L3.9 7.2L8.8 1.6" fill="none" stroke="#b3b3b3" stroke-width="1.5"/></svg>
<span class="t " id="t90" style="left:1510px;top:311.5px;color:#9d9d9d;font-size:12px;letter-spacing:0.426px;">Min Size</span>
<div class="b " style="left:1664px;top:318px;width:197px;height:2px;background:#4b4b4b;"></div>
<div class="b " style="left:1681px;top:314px;width:10px;height:10px;background:#7a7a7a;border-radius:5px;"></div>
<div class="b " style="left:1866px;top:310px;width:50px;height:18px;background:#222222;border:1px solid #1a1a1a;border-top-color:#0a0a0a;border-radius:3px;"></div>
<span class="t " id="t91" style="left:1869px;top:311.5px;color:#9d9d9d;font-size:12px;">1</span>
<span class="t " id="t92" style="left:1510px;top:331.5px;color:#9d9d9d;font-size:12px;letter-spacing:0.371px;">Max Depth</span>
<div class="b " style="left:1664px;top:338px;width:197px;height:2px;background:#4b4b4b;"></div>
<div class="b " style="left:1789px;top:334px;width:10px;height:10px;background:#7a7a7a;border-radius:5px;"></div>
<div class="b " style="left:1866px;top:330px;width:50px;height:18px;background:#222222;border:1px solid #1a1a1a;border-top-color:#0a0a0a;border-radius:3px;"></div>
<span class="t " id="t93" style="left:1869px;top:331.5px;color:#9d9d9d;font-size:12px;">7</span>
<svg class="b" style="left:1496.5px;top:356.5px;" width="10" height="8" viewBox="0 0 10 8"><path d="M0 0H10L5 8Z" fill="#565656"/></svg>
<span class="t " id="t94" style="left:1511px;top:351.5px;color:#a8a8a8;font-size:12px;letter-spacing:0.164px;font-weight:bold;">Objects</span>
<div class="b " style="left:1868px;top:350px;width:48px;height:18px;background:#222222;border:1px solid #1a1a1a;border-top-color:#0a0a0a;border-radius:3px;"></div>
<span class="t " id="t95" style="left:1871px;top:351.5px;color:#9d9d9d;font-size:12px;">4</span>
<div class="b " style="left:1509px;top:371px;width:406px;height:86px;background:#343434;border:1px solid #1d1d1d;border-radius:3px;"></div>
<svg class="b" style="left:1515px;top:382px;" width="10" height="4" viewBox="0 0 10 4"><path d="M0 .5H10M0 3.5H10" stroke="#4b4b4b" stroke-width="1"/></svg>
<span class="t " id="t96" style="left:1539px;top:376.5px;color:#9d9d9d;font-size:12px;letter-spacing:0.246px;">Element 0</span>
<div class="b " style="left:1672px;top:375px;width:238px;height:18px;background:#222222;border:1px solid #1a1a1a;border-top-color:#0a0a0a;border-radius:3px;"></div>
<div class="b " style="left:1890px;top:376px;width:19px;height:16px;background:#2c2c2c;border-radius:0 2px 2px 0;"></div>
<svg class="b" style="left:1675px;top:379px;" width="12" height="12" viewBox="0 0 16 16"><path d="M8 1.6L14 4.8V11.4L8 14.6L2 11.4V4.8Z" fill="none" stroke="#9d9d9d" stroke-width="1.1" stroke-linejoin="round"/><path d="M2.2 4.9L8 8L13.8 4.9M8 8V14.4" fill="none" stroke="#9d9d9d" stroke-width="1.1"/></svg>
<span class="t " id="t97" style="left:1688px;top:376.5px;color:#9d9d9d;font-size:12px;letter-spacing:0.045px;">Cube (1)</span>
<svg class="b" style="left:1892.5px;top:378px;" width="12" height="12" viewBox="0 0 12 12"><circle cx="6" cy="6" r="4.6" fill="none" stroke="#9d9d9d" stroke-width="1.1"/><circle cx="6" cy="6" r="1.7" fill="#9d9d9d"/></svg>
<svg class="b" style="left:1515px;top:402px;" width="10" height="4" viewBox="0 0 10 4"><path d="M0 .5H10M0 3.5H10" stroke="#4b4b4b" stroke-width="1"/></svg>
<span class="t " id="t98" style="left:1539px;top:396.5px;color:#9d9d9d;font-size:12px;letter-spacing:0.246px;">Element 1</span>
<div class="b " style="left:1672px;top:395px;width:238px;height:18px;background:#222222;border:1px solid #1a1a1a;border-top-color:#0a0a0a;border-radius:3px;"></div>
<div class="b " style="left:1890px;top:396px;width:19px;height:16px;background:#2c2c2c;border-radius:0 2px 2px 0;"></div>
<svg class="b" style="left:1675px;top:399px;" width="12" height="12" viewBox="0 0 16 16"><path d="M8 1.6L14 4.8V11.4L8 14.6L2 11.4V4.8Z" fill="none" stroke="#9d9d9d" stroke-width="1.1" stroke-linejoin="round"/><path d="M2.2 4.9L8 8L13.8 4.9M8 8V14.4" fill="none" stroke="#9d9d9d" stroke-width="1.1"/></svg>
<span class="t " id="t99" style="left:1688px;top:396.5px;color:#9d9d9d;font-size:12px;letter-spacing:0.104px;">Cube</span>
<svg class="b" style="left:1892.5px;top:398px;" width="12" height="12" viewBox="0 0 12 12"><circle cx="6" cy="6" r="4.6" fill="none" stroke="#9d9d9d" stroke-width="1.1"/><circle cx="6" cy="6" r="1.7" fill="#9d9d9d"/></svg>
<svg class="b" style="left:1515px;top:422px;" width="10" height="4" viewBox="0 0 10 4"><path d="M0 .5H10M0 3.5H10" stroke="#4b4b4b" stroke-width="1"/></svg>
<span class="t " id="t100" style="left:1539px;top:416.5px;color:#9d9d9d;font-size:12px;letter-spacing:0.246px;">Element 2</span>
<div class="b " style="left:1672px;top:415px;width:238px;height:18px;background:#222222;border:1px solid #1a1a1a;border-top-color:#0a0a0a;border-radius:3px;"></div>
<div class="b " style="left:1890px;top:416px;width:19px;height:16px;background:#2c2c2c;border-radius:0 2px 2px 0;"></div>
<svg class="b" style="left:1675px;top:419px;" width="12" height="12" viewBox="0 0 16 16"><path d="M8 1.6L14 4.8V11.4L8 14.6L2 11.4V4.8Z" fill="none" stroke="#9d9d9d" stroke-width="1.1" stroke-linejoin="round"/><path d="M2.2 4.9L8 8L13.8 4.9M8 8V14.4" fill="none" stroke="#9d9d9d" stroke-width="1.1"/></svg>
<span class="t " id="t101" style="left:1688px;top:416.5px;color:#9d9d9d;font-size:12px;letter-spacing:0.188px;">Cube (3)</span>
<svg class="b" style="left:1892.5px;top:418px;" width="12" height="12" viewBox="0 0 12 12"><circle cx="6" cy="6" r="4.6" fill="none" stroke="#9d9d9d" stroke-width="1.1"/><circle cx="6" cy="6" r="1.7" fill="#9d9d9d"/></svg>
<svg class="b" style="left:1515px;top:442px;" width="10" height="4" viewBox="0 0 10 4"><path d="M0 .5H10M0 3.5H10" stroke="#4b4b4b" stroke-width="1"/></svg>
<span class="t " id="t102" style="left:1539px;top:436.5px;color:#9d9d9d;font-size:12px;letter-spacing:0.246px;">Element 3</span>
<div class="b " style="left:1672px;top:435px;width:238px;height:18px;background:#222222;border:1px solid #1a1a1a;border-top-color:#0a0a0a;border-radius:3px;"></div>
<div class="b " style="left:1890px;top:436px;width:19px;height:16px;background:#2c2c2c;border-radius:0 2px 2px 0;"></div>
<svg class="b" style="left:1675px;top:439px;" width="12" height="12" viewBox="0 0 16 16"><path d="M8 1.6L14 4.8V11.4L8 14.6L2 11.4V4.8Z" fill="none" stroke="#9d9d9d" stroke-width="1.1" stroke-linejoin="round"/><path d="M2.2 4.9L8 8L13.8 4.9M8 8V14.4" fill="none" stroke="#9d9d9d" stroke-width="1.1"/></svg>
<span class="t " id="t103" style="left:1688px;top:436.5px;color:#9d9d9d;font-size:12px;letter-spacing:0.045px;">Cube (2)</span>
<svg class="b" style="left:1892.5px;top:438px;" width="12" height="12" viewBox="0 0 12 12"><circle cx="6" cy="6" r="4.6" fill="none" stroke="#9d9d9d" stroke-width="1.1"/><circle cx="6" cy="6" r="1.7" fill="#9d9d9d"/></svg>
<div class="b " style="left:1848px;top:457px;width:58px;height:20px;background:#343434;border:1px solid #1d1d1d;border-top:none;border-radius:0 0 3px 3px;"></div>
<svg class="b" style="left:1858px;top:461px;" width="12" height="12" viewBox="0 0 12 12"><path d="M6 1V11M1 6H11" stroke="#9d9d9d" stroke-width="1.5"/></svg>
<svg class="b" style="left:1884px;top:461px;" width="10" height="12" viewBox="0 0 10 12"><path d="M1 6H9" stroke="#9d9d9d" stroke-width="1.5"/></svg>
<span class="t " id="t104" style="left:1510px;top:491.5px;color:#a8a8a8;font-size:12px;letter-spacing:-0.005px;font-weight:bold;">构建信息</span>
<span class="t " id="t105" style="left:1510px;top:508.5px;color:#9d9d9d;font-size:12px;letter-spacing:0.303px;">Build Time Ms</span>
<div class="b " style="left:1664px;top:507px;width:251px;height:18px;background:#222222;border:1px solid #1a1a1a;border-top-color:#0a0a0a;border-radius:3px;"></div>
<span class="t " id="t106" style="left:1667px;top:508.5px;color:#9d9d9d;font-size:12px;letter-spacing:0.984px;">830</span>
<div class="b " style="left:1510px;top:540px;width:200px;height:17px;background:#464646;border-bottom:1px solid #2e2e2e;border-radius:3px;"></div>
<span class="t " id="t107" style="left:1586px;top:540.5px;color:#9d9d9d;font-size:12px;letter-spacing:-0.005px;">清除构建</span>
<div class="b " style="left:1715px;top:540px;width:200px;height:17px;background:#464646;border-bottom:1px solid #2e2e2e;border-radius:3px;"></div>
<span class="t " id="t108" style="left:1791px;top:540.5px;color:#9d9d9d;font-size:12px;letter-spacing:-0.005px;">重新构建</span>
<div class="b " style="left:1491px;top:567px;width:429px;height:1px;background:#151515;"></div>
<div class="b " style="left:1592px;top:577px;width:228px;height:23px;background:#464646;border-bottom:1px solid #2e2e2e;border-radius:3px;"></div>
<span class="t " id="t109" style="left:1661px;top:580.5px;color:#9d9d9d;font-size:12px;letter-spacing:0.272px;">Add Component</span>
</div>
</body></html>
